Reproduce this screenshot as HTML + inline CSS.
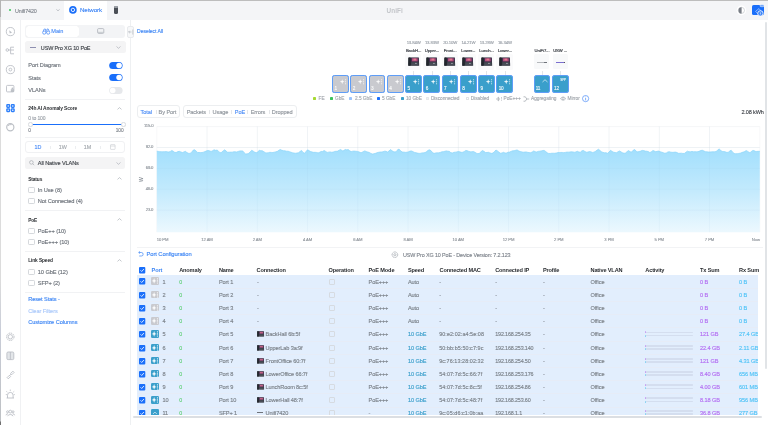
<!DOCTYPE html><html><head><meta charset="utf-8"><style>
*{box-sizing:border-box;margin:0;padding:0}
html,body{width:768px;height:425px;overflow:hidden;background:#fff}
body{position:relative;font-family:"Liberation Sans",sans-serif}
#w{position:absolute;left:0;top:0;width:768px;height:425px;overflow:hidden;will-change:transform;background:#fff}
.t{position:absolute;line-height:10px;white-space:nowrap;-webkit-text-stroke-width:0.13px}
.r{position:absolute}
svg{position:absolute;overflow:visible}
</style></head><body><div id="w">
<div class="r" style="left:0px;top:0px;width:768px;height:20px;background:#f4f5f7;"></div>
<div class="r" style="left:0px;top:0px;width:768px;height:1px;background:#bdbdbd;"></div>
<div class="r" style="left:64px;top:1px;width:43px;height:19px;background:#ffffff;"></div>
<div class="r" style="left:9px;top:9.3px;width:2.2px;height:2.2px;background:#38c55a;border-radius:50%"></div>
<div class="t" style="left:15px;top:5.5px;font-size:5.4px;color:#80868e;font-weight:400;letter-spacing:-0.12px;">Unifi7420</div>
<svg style="left:55.8px;top:9px" width="4" height="3"><path d="M0.4 0.4 L2 1.8 L3.6 0.4" fill="none" stroke="#9aa0a8" stroke-width="0.6"/></svg>
<svg style="left:69px;top:6.3px" width="8" height="8"><circle cx="3.9" cy="3.9" r="3.8" fill="#1a6ffa"/><circle cx="3.9" cy="3.9" r="1.7" fill="none" stroke="#fff" stroke-width="0.9"/></svg>
<div class="t" style="left:80px;top:5.199999999999999px;font-size:6.2px;color:#3e86f6;font-weight:400;letter-spacing:-0.1px;">Network</div>
<div class="r" style="left:113.5px;top:6px;width:4.5px;height:8px;background:#4a4f56;border-radius:1.5px"></div>
<div class="r" style="left:114px;top:6.3px;width:3.5px;height:1.5px;background:#9a9ea5;border-radius:1px"></div>
<div class="t" style="left:386.5px;top:5.5px;font-size:6.4px;color:#c3c6ca;font-weight:700;letter-spacing:0.1px;-webkit-text-stroke-width:0;">UniFi</div>
<svg style="left:736px;top:4.5px" width="11" height="11"><circle cx="5.4" cy="5.4" r="4.8" fill="#fff"/><circle cx="5.4" cy="5.4" r="3.1" fill="none" stroke="#b9bdc2" stroke-width="0.6"/><path d="M5.6 2.3 A3.1 3.1 0 0 0 5.6 8.5 Z" fill="#777c84"/></svg>
<div class="r" style="left:752.3px;top:5px;width:11.9px;height:9.9px;background:#1a6ffa;border-radius:1.6px"></div>
<svg style="left:750px;top:3px" width="18" height="15"><path d="M5.6 8.3 L9 5.6 L10.8 7.7 L7.4 10.4 Z" fill="none" stroke="#a9c9fd" stroke-width="0.75" stroke-linejoin="round"/><rect x="10" y="1.7" width="4" height="2" rx="1" fill="#69a3fb" stroke="#f4f5f7" stroke-width="0.5"/><circle cx="10.4" cy="10.4" r="2.7" fill="#3f86f8" stroke="#fff" stroke-width="0.8"/><path d="M10.4 9.3 V11.5" stroke="#fff" stroke-width="0.6"/></svg>
<div class="r" style="left:0px;top:0px;width:1.2px;height:425px;background:linear-gradient(#b4b4b4 0, #b4b4b4 17px, #dcdcdc 17px, #dcdcdc 280px, #c9cdd8 330px, #bfc2c6 410px, #bfc2c6 421px, #707070 422px);"></div>
<div class="r" style="left:20px;top:20px;width:0.8px;height:405px;background:#f0f1f3;"></div>
<svg style="left:0;top:0" width="20" height="425">
<g fill="none" stroke="#bcc0c6" stroke-width="0.9">
<circle cx="10.4" cy="31.6" r="4.1"/>
<circle cx="7.3" cy="50" r="1.3"/><path d="M8.6 50 H14 M10.6 47.2 V53.8 M10.6 47.2 H14 M10.6 53.8 H14"/>
<circle cx="10.4" cy="69.6" r="4.1"/><circle cx="10.4" cy="69.6" r="1.4"/>
<rect x="6.5" y="85.4" width="7.4" height="6.5" rx="0.9"/>
<circle cx="10.3" cy="127.2" r="3.6" stroke-width="1.15"/><path d="M8 125.8 Q9.5 124.2 11.6 124.6"/>
<circle cx="10.3" cy="336.8" r="2.2"/><circle cx="10.3" cy="336.8" r="3.7" stroke-dasharray="1.3 0.65" stroke-width="1"/>
<rect x="6.9" y="352" width="6.9" height="7.6" rx="1.2" fill="#e3e6e9"/><path d="M10.35 352 V359.6"/>
<path d="M7.1 377.6 L9.4 375.3 L10.6 376.5 L8.3 378.8 Z M10.6 373.5 L12.9 371.2 L14.1 372.4 L11.8 374.7 Z" stroke-linejoin="round"/><path d="M9.4 375.8 L11.2 374"/>
<path d="M6.6 398 H14 M7.5 398 V395.2 A2.8 2.8 0 0 1 13.1 395.2 V398 M10.3 389.6 V390.9 M6.4 391.4 L7.3 392.1 M14.2 391.4 L13.3 392.1 M5.8 394.6 H6.9 M13.7 394.6 H14.8"/>
<circle cx="10.3" cy="411.6" r="1.4"/><path d="M7.6 416.2 A2.8 2.3 0 0 1 13 416.2"/><circle cx="7.6" cy="411.8" r="1"/><circle cx="13" cy="411.8" r="1"/><path d="M6 415.3 A1.8 1.6 0 0 1 8 413.8 M14.6 415.3 A1.8 1.6 0 0 0 12.6 413.8"/>
</g>
<path d="M9.2 30.2 L12 32.4 L9.8 33.4 Z" fill="#bcc0c6"/>
<path d="M10.8 89.2 H14 V92 H10.8 Z" fill="#bcc0c6"/><circle cx="12.4" cy="88.4" r="0.9" fill="#bcc0c6"/>
<g fill="#2d7ff9">
<rect x="6.2" y="104" width="4" height="3.9" rx="1.1"/><rect x="10.8" y="104" width="4" height="3.9" rx="1.1"/>
<rect x="6.2" y="108.3" width="4" height="3.9" rx="1.1"/><rect x="10.8" y="108.3" width="4" height="3.9" rx="1.1"/>
</g>
<g fill="#fff"><circle cx="8.2" cy="106" r="0.7"/><circle cx="12.8" cy="106" r="0.7"/><circle cx="8.2" cy="110.2" r="0.7"/><circle cx="12.8" cy="110.2" r="0.7"/></g>
</svg>
<div class="r" style="left:130px;top:20px;width:0.8px;height:405px;background:#eef0f2;"></div>
<div class="r" style="left:25px;top:25.1px;width:99.5px;height:12.5px;background:#f3f4f6;border-radius:3px"></div>
<div class="r" style="left:25.6px;top:25.6px;width:53.4px;height:11.5px;background:#ffffff;border-radius:2.5px;box-shadow:0 0 0.5px rgba(0,0,0,0.12)"></div>
<svg style="left:41.5px;top:28px" width="9" height="7"><g fill="none" stroke="#4d8ef7" stroke-width="0.75"><circle cx="2.2" cy="4.6" r="1.6"/><circle cx="6.2" cy="4.6" r="1.6"/><path d="M1 3.5 L2.2 1 H3.4 L3.8 3.5 M7.4 3.5 L6.2 1 H5 L4.6 3.5 M3.8 4.2 H4.6"/></g></svg>
<div class="t" style="left:51.2px;top:26.4px;font-size:5.6px;color:#4d8ef7;font-weight:400;letter-spacing:0.05px;">Main</div>
<svg style="left:97px;top:27.8px" width="8" height="7"><rect x="0.6" y="0.6" width="6.2" height="4.8" rx="1" fill="none" stroke="#a9aeb5" stroke-width="0.75"/><path d="M1 4.3 H6.4" stroke="#a9aeb5" stroke-width="0.6"/></svg>
<div class="r" style="left:25px;top:41.1px;width:100.7px;height:12.2px;background:#f4f4f5;border-radius:2.5px"></div>
<div class="r" style="left:30px;top:47.2px;width:6px;height:0.7px;background:#8e8fb0;"></div>
<div class="t" style="left:40.8px;top:42.8px;font-size:5.5px;color:#3b3f45;font-weight:400;letter-spacing:-0.14px;">USW Pro XG 10 PoE</div>
<svg style="left:115.5px;top:46.3px" width="5" height="3"><path d="M0.5 0.5 L2.5 2.3 L4.5 0.5" fill="none" stroke="#a0a5ac" stroke-width="0.6"/></svg>
<div class="t" style="left:28.3px;top:60.0px;font-size:5.6px;color:#6b7179;font-weight:400;letter-spacing:-0.05px;">Port Diagram</div>
<svg style="left:109px;top:61.5px" width="14" height="7"><rect x="0.2" y="0" width="13.4" height="7" rx="3.5" fill="#1a6ffa"/><circle cx="10.1" cy="3.5" r="2.8" fill="#fff"/></svg>
<div class="t" style="left:28.3px;top:72.6px;font-size:5.6px;color:#6b7179;font-weight:400;letter-spacing:-0.05px;">Stats</div>
<svg style="left:109px;top:74.1px" width="14" height="7"><rect x="0.2" y="0" width="13.4" height="7" rx="3.5" fill="#1a6ffa"/><circle cx="10.1" cy="3.5" r="2.8" fill="#fff"/></svg>
<div class="t" style="left:28.3px;top:85.0px;font-size:5.6px;color:#6b7179;font-weight:400;letter-spacing:-0.05px;">VLANs</div>
<svg style="left:109px;top:86.5px" width="14" height="7"><rect x="0.2" y="0" width="13.4" height="7" rx="3.5" fill="#e6e8eb"/><circle cx="3.7" cy="3.5" r="2.8" fill="#fff"/></svg>
<div class="r" style="left:25px;top:98.5px;width:100px;height:0.6px;background:#f1f2f4;"></div>
<div class="t" style="left:28.2px;top:104.0px;font-size:4.9px;color:#2a2d31;font-weight:700;letter-spacing:-0.12px;-webkit-text-stroke-width:0;">24h AI Anomaly Score</div>
<svg style="left:116.5px;top:106.5px" width="5" height="3"><path d="M0.5 2.4 L2.5 0.6 L4.5 2.4" fill="none" stroke="#a0a5ac" stroke-width="0.6"/></svg>
<div class="t" style="left:28.2px;top:112.8px;font-size:5px;color:#9ba1a8;font-weight:400;letter-spacing:-0.1px;">0 to 100</div>
<div class="r" style="left:30px;top:123.9px;width:93px;height:1.1px;background:#1a6ffa;"></div>
<div class="r" style="left:27.8px;top:121.9px;width:5px;height:5px;background:#fff;border-radius:50%;border:0.5px solid #dfe2e6;box-shadow:0 0 0.6px rgba(0,0,0,0.15)"></div>
<div class="r" style="left:120.6px;top:121.9px;width:5px;height:5px;background:#fff;border-radius:50%;border:0.5px solid #dfe2e6;box-shadow:0 0 0.6px rgba(0,0,0,0.15)"></div>
<div class="t" style="left:28.3px;top:126.30000000000001px;font-size:4.8px;color:#80868e;font-weight:400;">0</div>
<div class="t" style="right:644.5px;top:126.30000000000001px;font-size:4.8px;color:#80868e;font-weight:400;letter-spacing:-0.1px;">100</div>
<div class="r" style="left:25px;top:137px;width:100px;height:0.6px;background:#f1f2f4;"></div>
<div class="r" style="left:25px;top:140.8px;width:100px;height:12.4px;background:#fff;border-radius:3px;border:0.6px solid #f0f1f3"></div>
<div class="t" style="left:-12px;width:100px;text-align:center;top:142.0px;font-size:5.4px;color:#4d8ef7;font-weight:400;">1D</div>
<div class="t" style="left:12.799999999999997px;width:100px;text-align:center;top:142.0px;font-size:5.4px;color:#a3a8ae;font-weight:400;">1W</div>
<div class="t" style="left:37.5px;width:100px;text-align:center;top:142.0px;font-size:5.4px;color:#a3a8ae;font-weight:400;">1M</div>
<div class="r" style="left:50.3px;top:145.5px;width:0.5px;height:3px;background:#eceef0;"></div>
<div class="r" style="left:75.3px;top:145.5px;width:0.5px;height:3px;background:#eceef0;"></div>
<div class="r" style="left:100.3px;top:145.5px;width:0.5px;height:3px;background:#eceef0;"></div>
<svg style="left:110px;top:144px" width="6" height="6"><rect x="0.5" y="0.6" width="4.6" height="4.8" rx="0.5" fill="none" stroke="#c3c7cc" stroke-width="0.55"/><path d="M0.5 2 H5.1" stroke="#c3c7cc" stroke-width="0.55"/></svg>
<div class="r" style="left:25px;top:156.8px;width:100px;height:12.3px;background:#f4f4f5;border-radius:2.5px"></div>
<svg style="left:28.5px;top:160.3px" width="6" height="6"><circle cx="2.4" cy="2.4" r="1.8" fill="none" stroke="#9ca1a8" stroke-width="0.6"/><path d="M3.7 3.7 L5.2 5.2" stroke="#9ca1a8" stroke-width="0.6"/></svg>
<div class="t" style="left:37.8px;top:158.2px;font-size:5.6px;color:#3b3f45;font-weight:400;letter-spacing:-0.1px;">All Native VLANs</div>
<svg style="left:115.5px;top:161.8px" width="5" height="3"><path d="M0.5 0.5 L2.5 2.3 L4.5 0.5" fill="none" stroke="#a0a5ac" stroke-width="0.6"/></svg>
<div class="t" style="left:28.2px;top:174.8px;font-size:4.8px;color:#2a2d31;font-weight:700;letter-spacing:-0.1px;-webkit-text-stroke-width:0;">Status</div>
<svg style="left:116.5px;top:177.0px" width="5" height="3"><path d="M0.5 2.4 L2.5 0.6 L4.5 2.4" fill="none" stroke="#a0a5ac" stroke-width="0.6"/></svg>
<div class="r" style="left:28.3px;top:186.9px;width:6.4px;height:6.4px;background:#fff;border:0.6px solid #d5d8dc;border-radius:1.2px"></div>
<div class="t" style="left:37.8px;top:185.0px;font-size:5.7px;color:#6b7179;font-weight:400;letter-spacing:-0.1px;">In Use (8)</div>
<div class="r" style="left:28.3px;top:197.9px;width:6.4px;height:6.4px;background:#fff;border:0.6px solid #d5d8dc;border-radius:1.2px"></div>
<div class="t" style="left:37.8px;top:196.0px;font-size:5.7px;color:#6b7179;font-weight:400;letter-spacing:-0.1px;">Not Connected (4)</div>
<div class="r" style="left:25px;top:209.5px;width:100px;height:0.6px;background:#f1f2f4;"></div>
<div class="t" style="left:28.2px;top:215.5px;font-size:4.8px;color:#2a2d31;font-weight:700;letter-spacing:-0.1px;-webkit-text-stroke-width:0;">PoE</div>
<svg style="left:116.5px;top:217.7px" width="5" height="3"><path d="M0.5 2.4 L2.5 0.6 L4.5 2.4" fill="none" stroke="#a0a5ac" stroke-width="0.6"/></svg>
<div class="r" style="left:28.3px;top:227.9px;width:6.4px;height:6.4px;background:#fff;border:0.6px solid #d5d8dc;border-radius:1.2px"></div>
<div class="t" style="left:37.8px;top:226.0px;font-size:5.7px;color:#6b7179;font-weight:400;letter-spacing:-0.1px;">PoE++ (10)</div>
<div class="r" style="left:28.3px;top:238.70000000000002px;width:6.4px;height:6.4px;background:#fff;border:0.6px solid #d5d8dc;border-radius:1.2px"></div>
<div class="t" style="left:37.8px;top:236.8px;font-size:5.7px;color:#6b7179;font-weight:400;letter-spacing:-0.1px;">PoE+++ (10)</div>
<div class="r" style="left:25px;top:251px;width:100px;height:0.6px;background:#f1f2f4;"></div>
<div class="t" style="left:28.2px;top:256.4px;font-size:4.8px;color:#2a2d31;font-weight:700;letter-spacing:-0.1px;-webkit-text-stroke-width:0;">Link Speed</div>
<svg style="left:116.5px;top:258.6px" width="5" height="3"><path d="M0.5 2.4 L2.5 0.6 L4.5 2.4" fill="none" stroke="#a0a5ac" stroke-width="0.6"/></svg>
<div class="r" style="left:28.3px;top:268.79999999999995px;width:6.4px;height:6.4px;background:#fff;border:0.6px solid #d5d8dc;border-radius:1.2px"></div>
<div class="t" style="left:37.8px;top:266.9px;font-size:5.7px;color:#6b7179;font-weight:400;letter-spacing:-0.1px;">10 GbE (12)</div>
<div class="r" style="left:28.3px;top:279.9px;width:6.4px;height:6.4px;background:#fff;border:0.6px solid #d5d8dc;border-radius:1.2px"></div>
<div class="t" style="left:37.8px;top:278.0px;font-size:5.7px;color:#6b7179;font-weight:400;letter-spacing:-0.1px;">SFP+ (2)</div>
<div class="r" style="left:25px;top:291.6px;width:100px;height:0.6px;background:#f1f2f4;"></div>
<div class="t" style="left:28.2px;top:294.4px;font-size:5.6px;color:#3d86f5;font-weight:400;letter-spacing:-0.05px;">Reset Stats -</div>
<div class="t" style="left:28.2px;top:305.7px;font-size:5.6px;color:#a9c8fa;font-weight:400;letter-spacing:-0.05px;">Clear Filters</div>
<div class="t" style="left:28.2px;top:316.8px;font-size:5.6px;color:#3d86f5;font-weight:400;letter-spacing:-0.05px;">Customize Columns</div>
<div class="r" style="left:127px;top:25.5px;width:7.4px;height:12.5px;background:#f7f8f9;border:0.6px solid #e8eaed;border-radius:2px"></div>
<svg style="left:128px;top:28.5px" width="6" height="6"><path d="M4.8 0.5 V5.5 M3.5 3 H0.6 M1.8 1.8 L0.6 3 L1.8 4.2" fill="none" stroke="#a9aeb5" stroke-width="0.6"/></svg>
<div class="t" style="left:137px;top:26.4px;font-size:5.1px;color:#3d86f5;font-weight:400;letter-spacing:-0.05px;">Deselect All</div>
<div class="r" style="left:765px;top:21.9px;width:1.9px;height:347px;background:#e1e4e7;border-radius:1px"></div>
<div class="r" style="left:332.2px;top:75.0px;width:16.8px;height:17.5px;background:#c9cacf;border:1.45px solid #5e9df7;border-radius:2.6px;box-shadow:0 0 0.6px #8fbdfb"></div>
<svg style="left:339.8px;top:78.6px" width="7" height="7"><path d="M2.2 0.2 L2.8 2.1 L4.6 2.7 L2.8 3.3 L2.2 5.2 L1.6 3.3 L-0.2 2.7 L1.6 2.1 Z" fill="rgba(255,255,255,0.92)"/><circle cx="5.6" cy="0.7" r="0.55" fill="rgba(255,255,255,0.92)"/><circle cx="5.6" cy="2.7" r="0.55" fill="rgba(255,255,255,0.92)"/><circle cx="5.6" cy="4.7" r="0.55" fill="rgba(255,255,255,0.92)"/></svg>
<div class="t" style="left:334.4px;top:84.1px;font-size:4.7px;color:rgba(255,255,255,0.92);font-weight:400;letter-spacing:-0.2px;">1</div>
<div class="r" style="left:350.45px;top:75.0px;width:16.8px;height:17.5px;background:#c9cacf;border:1.45px solid #5e9df7;border-radius:2.6px;box-shadow:0 0 0.6px #8fbdfb"></div>
<svg style="left:358.05px;top:78.6px" width="7" height="7"><path d="M2.2 0.2 L2.8 2.1 L4.6 2.7 L2.8 3.3 L2.2 5.2 L1.6 3.3 L-0.2 2.7 L1.6 2.1 Z" fill="rgba(255,255,255,0.92)"/><circle cx="5.6" cy="0.7" r="0.55" fill="rgba(255,255,255,0.92)"/><circle cx="5.6" cy="2.7" r="0.55" fill="rgba(255,255,255,0.92)"/><circle cx="5.6" cy="4.7" r="0.55" fill="rgba(255,255,255,0.92)"/></svg>
<div class="t" style="left:352.65px;top:84.1px;font-size:4.7px;color:rgba(255,255,255,0.92);font-weight:400;letter-spacing:-0.2px;">2</div>
<div class="r" style="left:368.7px;top:75.0px;width:16.8px;height:17.5px;background:#c9cacf;border:1.45px solid #5e9df7;border-radius:2.6px;box-shadow:0 0 0.6px #8fbdfb"></div>
<svg style="left:376.3px;top:78.6px" width="7" height="7"><path d="M2.2 0.2 L2.8 2.1 L4.6 2.7 L2.8 3.3 L2.2 5.2 L1.6 3.3 L-0.2 2.7 L1.6 2.1 Z" fill="rgba(255,255,255,0.92)"/><circle cx="5.6" cy="0.7" r="0.55" fill="rgba(255,255,255,0.92)"/><circle cx="5.6" cy="2.7" r="0.55" fill="rgba(255,255,255,0.92)"/><circle cx="5.6" cy="4.7" r="0.55" fill="rgba(255,255,255,0.92)"/></svg>
<div class="t" style="left:370.9px;top:84.1px;font-size:4.7px;color:rgba(255,255,255,0.92);font-weight:400;letter-spacing:-0.2px;">3</div>
<div class="r" style="left:386.95px;top:75.0px;width:16.8px;height:17.5px;background:#c9cacf;border:1.45px solid #5e9df7;border-radius:2.6px;box-shadow:0 0 0.6px #8fbdfb"></div>
<svg style="left:394.55px;top:78.6px" width="7" height="7"><path d="M2.2 0.2 L2.8 2.1 L4.6 2.7 L2.8 3.3 L2.2 5.2 L1.6 3.3 L-0.2 2.7 L1.6 2.1 Z" fill="rgba(255,255,255,0.92)"/><circle cx="5.6" cy="0.7" r="0.55" fill="rgba(255,255,255,0.92)"/><circle cx="5.6" cy="2.7" r="0.55" fill="rgba(255,255,255,0.92)"/><circle cx="5.6" cy="4.7" r="0.55" fill="rgba(255,255,255,0.92)"/></svg>
<div class="t" style="left:389.15px;top:84.1px;font-size:4.7px;color:rgba(255,255,255,0.92);font-weight:400;letter-spacing:-0.2px;">4</div>
<div class="r" style="left:405.2px;top:75.0px;width:16.8px;height:17.5px;background:#3a9fcb;border:1.45px solid #5e9df7;border-radius:2.6px;box-shadow:0 0 0.6px #8fbdfb"></div>
<svg style="left:412.8px;top:78.6px" width="7" height="7"><path d="M2.2 0.2 L2.8 2.1 L4.6 2.7 L2.8 3.3 L2.2 5.2 L1.6 3.3 L-0.2 2.7 L1.6 2.1 Z" fill="rgba(255,255,255,0.92)"/><circle cx="5.6" cy="0.7" r="0.55" fill="rgba(255,255,255,0.92)"/><circle cx="5.6" cy="2.7" r="0.55" fill="rgba(255,255,255,0.92)"/><circle cx="5.6" cy="4.7" r="0.55" fill="rgba(255,255,255,0.92)"/></svg>
<div class="t" style="left:407.4px;top:84.1px;font-size:4.7px;color:rgba(255,255,255,0.92);font-weight:400;letter-spacing:-0.2px;">5</div>
<div class="r" style="left:423.45px;top:75.0px;width:16.8px;height:17.5px;background:#3a9fcb;border:1.45px solid #5e9df7;border-radius:2.6px;box-shadow:0 0 0.6px #8fbdfb"></div>
<svg style="left:431.05px;top:78.6px" width="7" height="7"><path d="M2.2 0.2 L2.8 2.1 L4.6 2.7 L2.8 3.3 L2.2 5.2 L1.6 3.3 L-0.2 2.7 L1.6 2.1 Z" fill="rgba(255,255,255,0.92)"/><circle cx="5.6" cy="0.7" r="0.55" fill="rgba(255,255,255,0.92)"/><circle cx="5.6" cy="2.7" r="0.55" fill="rgba(255,255,255,0.92)"/><circle cx="5.6" cy="4.7" r="0.55" fill="rgba(255,255,255,0.92)"/></svg>
<div class="t" style="left:425.65px;top:84.1px;font-size:4.7px;color:rgba(255,255,255,0.92);font-weight:400;letter-spacing:-0.2px;">6</div>
<div class="r" style="left:441.7px;top:75.0px;width:16.8px;height:17.5px;background:#3a9fcb;border:1.45px solid #5e9df7;border-radius:2.6px;box-shadow:0 0 0.6px #8fbdfb"></div>
<svg style="left:449.3px;top:78.6px" width="7" height="7"><path d="M2.2 0.2 L2.8 2.1 L4.6 2.7 L2.8 3.3 L2.2 5.2 L1.6 3.3 L-0.2 2.7 L1.6 2.1 Z" fill="rgba(255,255,255,0.92)"/><circle cx="5.6" cy="0.7" r="0.55" fill="rgba(255,255,255,0.92)"/><circle cx="5.6" cy="2.7" r="0.55" fill="rgba(255,255,255,0.92)"/><circle cx="5.6" cy="4.7" r="0.55" fill="rgba(255,255,255,0.92)"/></svg>
<div class="t" style="left:443.9px;top:84.1px;font-size:4.7px;color:rgba(255,255,255,0.92);font-weight:400;letter-spacing:-0.2px;">7</div>
<div class="r" style="left:459.95px;top:75.0px;width:16.8px;height:17.5px;background:#3a9fcb;border:1.45px solid #5e9df7;border-radius:2.6px;box-shadow:0 0 0.6px #8fbdfb"></div>
<svg style="left:467.55px;top:78.6px" width="7" height="7"><path d="M2.2 0.2 L2.8 2.1 L4.6 2.7 L2.8 3.3 L2.2 5.2 L1.6 3.3 L-0.2 2.7 L1.6 2.1 Z" fill="rgba(255,255,255,0.92)"/><circle cx="5.6" cy="0.7" r="0.55" fill="rgba(255,255,255,0.92)"/><circle cx="5.6" cy="2.7" r="0.55" fill="rgba(255,255,255,0.92)"/><circle cx="5.6" cy="4.7" r="0.55" fill="rgba(255,255,255,0.92)"/></svg>
<div class="t" style="left:462.15px;top:84.1px;font-size:4.7px;color:rgba(255,255,255,0.92);font-weight:400;letter-spacing:-0.2px;">8</div>
<div class="r" style="left:478.2px;top:75.0px;width:16.8px;height:17.5px;background:#3a9fcb;border:1.45px solid #5e9df7;border-radius:2.6px;box-shadow:0 0 0.6px #8fbdfb"></div>
<svg style="left:485.8px;top:78.6px" width="7" height="7"><path d="M2.2 0.2 L2.8 2.1 L4.6 2.7 L2.8 3.3 L2.2 5.2 L1.6 3.3 L-0.2 2.7 L1.6 2.1 Z" fill="rgba(255,255,255,0.92)"/><circle cx="5.6" cy="0.7" r="0.55" fill="rgba(255,255,255,0.92)"/><circle cx="5.6" cy="2.7" r="0.55" fill="rgba(255,255,255,0.92)"/><circle cx="5.6" cy="4.7" r="0.55" fill="rgba(255,255,255,0.92)"/></svg>
<div class="t" style="left:480.4px;top:84.1px;font-size:4.7px;color:rgba(255,255,255,0.92);font-weight:400;letter-spacing:-0.2px;">9</div>
<div class="r" style="left:496.45px;top:75.0px;width:16.8px;height:17.5px;background:#3a9fcb;border:1.45px solid #5e9df7;border-radius:2.6px;box-shadow:0 0 0.6px #8fbdfb"></div>
<svg style="left:504.05px;top:78.6px" width="7" height="7"><path d="M2.2 0.2 L2.8 2.1 L4.6 2.7 L2.8 3.3 L2.2 5.2 L1.6 3.3 L-0.2 2.7 L1.6 2.1 Z" fill="rgba(255,255,255,0.92)"/><circle cx="5.6" cy="0.7" r="0.55" fill="rgba(255,255,255,0.92)"/><circle cx="5.6" cy="2.7" r="0.55" fill="rgba(255,255,255,0.92)"/><circle cx="5.6" cy="4.7" r="0.55" fill="rgba(255,255,255,0.92)"/></svg>
<div class="t" style="left:498.65px;top:84.1px;font-size:4.7px;color:rgba(255,255,255,0.92);font-weight:400;letter-spacing:-0.2px;">10</div>
<div class="r" style="left:533.5px;top:75.0px;width:16.8px;height:17.5px;background:#3a9fcb;border:1.45px solid #5e9df7;border-radius:2.6px;box-shadow:0 0 0.6px #8fbdfb"></div>
<svg style="left:541.5px;top:79.0px" width="6" height="4"><path d="M0.5 3 L3 0.7 L5.5 3" fill="none" stroke="rgba(255,255,255,0.92)" stroke-width="0.7"/></svg>
<div class="t" style="left:535.7px;top:84.1px;font-size:4.7px;color:rgba(255,255,255,0.92);font-weight:400;letter-spacing:-0.2px;">11</div>
<div class="r" style="left:551.8px;top:75.0px;width:16.8px;height:17.5px;background:#3a9fcb;border:1.45px solid #5e9df7;border-radius:2.6px;box-shadow:0 0 0.6px #8fbdfb"></div>
<div class="t" style="left:513.0999999999999px;width:100px;text-align:center;top:75.0px;font-size:3px;color:rgba(255,255,255,0.92);font-weight:700;letter-spacing:-0.1px;-webkit-text-stroke-width:0;">SFP</div>
<div class="t" style="left:554.0px;top:84.1px;font-size:4.7px;color:rgba(255,255,255,0.92);font-weight:400;letter-spacing:-0.2px;">12</div>
<div class="t" style="left:363.59999999999997px;width:100px;text-align:center;top:37.5px;font-size:4.3px;color:#9aa0a8;font-weight:400;letter-spacing:-0.15px;">13.84W</div>
<div class="t" style="left:363.59999999999997px;width:100px;text-align:center;top:45.9px;font-size:4.2px;color:#45494f;font-weight:400;letter-spacing:-0.05px;-webkit-text-stroke-width:0.2px;">BackH...</div>
<div class="r" style="left:405.09999999999997px;top:54.1px;width:16.2px;height:15.5px;background:#fafafb;border-radius:1.5px"></div>
<svg style="left:407.59999999999997px;top:57.4px" width="12" height="10"><path d="M0.6 0.4 H10.8 L11.2 8.8 H0.2 Z" fill="#2f333c"/><rect x="0.3" y="0.4" width="2.4" height="8.4" rx="0.6" fill="#22252c"/><rect x="3" y="0.9" width="7.6" height="3.9" fill="#4a2d52"/><rect x="4" y="1.3" width="5.6" height="3" fill="#b4507c"/><rect x="5.5" y="1.6" width="2.6" height="1.8" fill="#e27a8e"/><rect x="3.2" y="5.3" width="7.4" height="3" fill="#474b55"/><rect x="7.4" y="5.9" width="1.1" height="1.1" fill="#b9bcc4"/></svg>
<div class="r" style="left:413.4px;top:71px;width:0.5px;height:3.5px;background:#e3e5e8;"></div>
<div class="t" style="left:381.84999999999997px;width:100px;text-align:center;top:37.5px;font-size:4.3px;color:#9aa0a8;font-weight:400;letter-spacing:-0.15px;">13.83W</div>
<div class="t" style="left:381.84999999999997px;width:100px;text-align:center;top:45.9px;font-size:4.2px;color:#45494f;font-weight:400;letter-spacing:-0.05px;-webkit-text-stroke-width:0.2px;">Upper...</div>
<div class="r" style="left:423.34999999999997px;top:54.1px;width:16.2px;height:15.5px;background:#fafafb;border-radius:1.5px"></div>
<svg style="left:425.84999999999997px;top:57.4px" width="12" height="10"><path d="M0.6 0.4 H10.8 L11.2 8.8 H0.2 Z" fill="#2f333c"/><rect x="0.3" y="0.4" width="2.4" height="8.4" rx="0.6" fill="#22252c"/><rect x="3" y="0.9" width="7.6" height="3.9" fill="#4a2d52"/><rect x="4" y="1.3" width="5.6" height="3" fill="#b4507c"/><rect x="5.5" y="1.6" width="2.6" height="1.8" fill="#e27a8e"/><rect x="3.2" y="5.3" width="7.4" height="3" fill="#474b55"/><rect x="7.4" y="5.9" width="1.1" height="1.1" fill="#b9bcc4"/></svg>
<div class="r" style="left:431.65px;top:71px;width:0.5px;height:3.5px;background:#e3e5e8;"></div>
<div class="t" style="left:400.09999999999997px;width:100px;text-align:center;top:37.5px;font-size:4.3px;color:#9aa0a8;font-weight:400;letter-spacing:-0.15px;">20.10W</div>
<div class="t" style="left:400.09999999999997px;width:100px;text-align:center;top:45.9px;font-size:4.2px;color:#45494f;font-weight:400;letter-spacing:-0.05px;-webkit-text-stroke-width:0.2px;">Front...</div>
<div class="r" style="left:441.59999999999997px;top:54.1px;width:16.2px;height:15.5px;background:#fafafb;border-radius:1.5px"></div>
<svg style="left:444.09999999999997px;top:57.4px" width="12" height="10"><path d="M0.6 0.4 H10.8 L11.2 8.8 H0.2 Z" fill="#2f333c"/><rect x="0.3" y="0.4" width="2.4" height="8.4" rx="0.6" fill="#22252c"/><rect x="3" y="0.9" width="7.6" height="3.9" fill="#4a2d52"/><rect x="4" y="1.3" width="5.6" height="3" fill="#b4507c"/><rect x="5.5" y="1.6" width="2.6" height="1.8" fill="#e27a8e"/><rect x="3.2" y="5.3" width="7.4" height="3" fill="#474b55"/><rect x="7.4" y="5.9" width="1.1" height="1.1" fill="#b9bcc4"/></svg>
<div class="r" style="left:449.9px;top:71px;width:0.5px;height:3.5px;background:#e3e5e8;"></div>
<div class="t" style="left:418.34999999999997px;width:100px;text-align:center;top:37.5px;font-size:4.3px;color:#9aa0a8;font-weight:400;letter-spacing:-0.15px;">14.21W</div>
<div class="t" style="left:418.34999999999997px;width:100px;text-align:center;top:45.9px;font-size:4.2px;color:#45494f;font-weight:400;letter-spacing:-0.05px;-webkit-text-stroke-width:0.2px;">Lower...</div>
<div class="r" style="left:459.84999999999997px;top:54.1px;width:16.2px;height:15.5px;background:#fafafb;border-radius:1.5px"></div>
<svg style="left:462.34999999999997px;top:57.4px" width="12" height="10"><path d="M0.6 0.4 H10.8 L11.2 8.8 H0.2 Z" fill="#2f333c"/><rect x="0.3" y="0.4" width="2.4" height="8.4" rx="0.6" fill="#22252c"/><rect x="3" y="0.9" width="7.6" height="3.9" fill="#4a2d52"/><rect x="4" y="1.3" width="5.6" height="3" fill="#b4507c"/><rect x="5.5" y="1.6" width="2.6" height="1.8" fill="#e27a8e"/><rect x="3.2" y="5.3" width="7.4" height="3" fill="#474b55"/><rect x="7.4" y="5.9" width="1.1" height="1.1" fill="#b9bcc4"/></svg>
<div class="r" style="left:468.15px;top:71px;width:0.5px;height:3.5px;background:#e3e5e8;"></div>
<div class="t" style="left:436.59999999999997px;width:100px;text-align:center;top:37.5px;font-size:4.3px;color:#9aa0a8;font-weight:400;letter-spacing:-0.15px;">13.28W</div>
<div class="t" style="left:436.59999999999997px;width:100px;text-align:center;top:45.9px;font-size:4.2px;color:#45494f;font-weight:400;letter-spacing:-0.05px;-webkit-text-stroke-width:0.2px;">Lunch...</div>
<div class="r" style="left:478.09999999999997px;top:54.1px;width:16.2px;height:15.5px;background:#fafafb;border-radius:1.5px"></div>
<svg style="left:480.59999999999997px;top:57.4px" width="12" height="10"><path d="M0.6 0.4 H10.8 L11.2 8.8 H0.2 Z" fill="#2f333c"/><rect x="0.3" y="0.4" width="2.4" height="8.4" rx="0.6" fill="#22252c"/><rect x="3" y="0.9" width="7.6" height="3.9" fill="#4a2d52"/><rect x="4" y="1.3" width="5.6" height="3" fill="#b4507c"/><rect x="5.5" y="1.6" width="2.6" height="1.8" fill="#e27a8e"/><rect x="3.2" y="5.3" width="7.4" height="3" fill="#474b55"/><rect x="7.4" y="5.9" width="1.1" height="1.1" fill="#b9bcc4"/></svg>
<div class="r" style="left:486.4px;top:71px;width:0.5px;height:3.5px;background:#e3e5e8;"></div>
<div class="t" style="left:454.84999999999997px;width:100px;text-align:center;top:37.5px;font-size:4.3px;color:#9aa0a8;font-weight:400;letter-spacing:-0.15px;">16.34W</div>
<div class="t" style="left:454.84999999999997px;width:100px;text-align:center;top:45.9px;font-size:4.2px;color:#45494f;font-weight:400;letter-spacing:-0.05px;-webkit-text-stroke-width:0.2px;">Lower...</div>
<div class="r" style="left:496.34999999999997px;top:54.1px;width:16.2px;height:15.5px;background:#fafafb;border-radius:1.5px"></div>
<svg style="left:498.84999999999997px;top:57.4px" width="12" height="10"><path d="M0.6 0.4 H10.8 L11.2 8.8 H0.2 Z" fill="#2f333c"/><rect x="0.3" y="0.4" width="2.4" height="8.4" rx="0.6" fill="#22252c"/><rect x="3" y="0.9" width="7.6" height="3.9" fill="#4a2d52"/><rect x="4" y="1.3" width="5.6" height="3" fill="#b4507c"/><rect x="5.5" y="1.6" width="2.6" height="1.8" fill="#e27a8e"/><rect x="3.2" y="5.3" width="7.4" height="3" fill="#474b55"/><rect x="7.4" y="5.9" width="1.1" height="1.1" fill="#b9bcc4"/></svg>
<div class="r" style="left:504.65px;top:71px;width:0.5px;height:3.5px;background:#e3e5e8;"></div>
<div class="t" style="left:492.0px;width:100px;text-align:center;top:45.9px;font-size:4.2px;color:#45494f;font-weight:400;letter-spacing:-0.05px;-webkit-text-stroke-width:0.2px;">UniFi7...</div>
<div class="r" style="left:534.4px;top:54.2px;width:15px;height:15.2px;background:#f8f9fa;border-radius:1.5px"></div>
<div class="r" style="left:541.8px;top:71px;width:0.5px;height:3.5px;background:#e3e5e8;"></div>
<div class="t" style="left:510.20000000000005px;width:100px;text-align:center;top:45.9px;font-size:4.2px;color:#45494f;font-weight:400;letter-spacing:-0.05px;-webkit-text-stroke-width:0.2px;">USW ...</div>
<div class="r" style="left:552.6px;top:54.2px;width:15px;height:15.2px;background:#f8f9fa;border-radius:1.5px"></div>
<div class="r" style="left:560.0px;top:71px;width:0.5px;height:3.5px;background:#e3e5e8;"></div>
<div class="r" style="left:536.7px;top:61.6px;width:10.1px;height:1px;background:#b5b8bc;"></div>
<div class="r" style="left:543.5px;top:61.6px;width:3.3px;height:1px;background:#6f737a;"></div>
<div class="r" style="left:556px;top:61.8px;width:8px;height:1px;background:#7b6fd0;"></div>
<div class="r" style="left:563.5px;top:61.6px;width:1.5px;height:1.4px;background:#555;"></div>
<div class="r" style="left:313px;top:97px;width:3px;height:3px;background:#a6d932;border-radius:0.4px"></div>
<div class="t" style="left:318.5px;top:93.8px;font-size:4.75px;color:#a3a8ae;font-weight:400;letter-spacing:-0.02px;">FE</div>
<div class="r" style="left:330px;top:97px;width:3px;height:3px;background:#3cc25c;border-radius:0.4px"></div>
<div class="t" style="left:335px;top:93.8px;font-size:4.75px;color:#a3a8ae;font-weight:400;letter-spacing:-0.02px;">GbE</div>
<div class="r" style="left:349px;top:97px;width:3px;height:3px;background:#9cc4fb;border-radius:0.4px"></div>
<div class="t" style="left:355px;top:93.8px;font-size:4.75px;color:#a3a8ae;font-weight:400;letter-spacing:-0.02px;">2.5 GbE</div>
<div class="r" style="left:377px;top:97px;width:3px;height:3px;background:#1a6ffa;border-radius:0.4px"></div>
<div class="t" style="left:382px;top:93.8px;font-size:4.75px;color:#a3a8ae;font-weight:400;letter-spacing:-0.02px;">5 GbE</div>
<div class="r" style="left:401px;top:97px;width:3px;height:3px;background:#3a9fcb;border-radius:0.4px"></div>
<div class="t" style="left:405.9px;top:93.8px;font-size:4.75px;color:#a3a8ae;font-weight:400;letter-spacing:-0.02px;">10 GbE</div>
<div class="r" style="left:426px;top:97px;width:3px;height:3px;background:#f0f1f3;border:0.6px solid #e6e8eb;border-radius:0.4px"></div>
<div class="t" style="left:430.9px;top:93.8px;font-size:4.75px;color:#a3a8ae;font-weight:400;letter-spacing:-0.02px;">Disconnected</div>
<div class="r" style="left:466px;top:97px;width:3px;height:3px;background:#fff;border:0.6px solid #e0e3e6;border-radius:0.4px"></div>
<div class="t" style="left:470.8px;top:93.8px;font-size:4.75px;color:#a3a8ae;font-weight:400;letter-spacing:-0.02px;">Disabled</div>
<svg style="left:495.5px;top:95.8px" width="7" height="6"><path d="M0.5 3 L2.6 1.2 V4.8 Z M2.6 3 H4" fill="none" stroke="#8f959c" stroke-width="0.6"/><path d="M5.5 1 V5" stroke="#8f959c" stroke-width="0.6" stroke-dasharray="0.8 0.6"/></svg>
<div class="t" style="left:503.5px;top:93.8px;font-size:4.75px;color:#a3a8ae;font-weight:400;letter-spacing:-0.02px;">PoE+++</div>
<svg style="left:523.3px;top:95.8px" width="7" height="6"><path d="M0.5 0.8 H2.3 L3.8 3 L2.3 5.2 H0.5 M3.8 3 H6.2" fill="none" stroke="#8f959c" stroke-width="0.6"/></svg>
<div class="t" style="left:531px;top:93.8px;font-size:4.75px;color:#a3a8ae;font-weight:400;letter-spacing:-0.02px;">Aggregating</div>
<svg style="left:559.8px;top:96.0px" width="7" height="6"><path d="M0.4 2.6 Q3.1 -0.7 5.8 2.6 Q3.1 5.9 0.4 2.6 Z" fill="none" stroke="#a3a8ae" stroke-width="0.65"/><circle cx="3.1" cy="2.6" r="1.1" fill="none" stroke="#a3a8ae" stroke-width="0.65"/></svg>
<div class="t" style="left:567.5px;top:93.8px;font-size:4.75px;color:#a3a8ae;font-weight:400;letter-spacing:-0.02px;">Mirror</div>
<svg style="left:582.3px;top:95.2px" width="8" height="8"><circle cx="3.6" cy="3.6" r="3.1" fill="none" stroke="#4d8ef7" stroke-width="0.7"/><path d="M3.6 3 V5.4" stroke="#4d8ef7" stroke-width="0.7"/><circle cx="3.6" cy="1.9" r="0.4" fill="#4d8ef7"/></svg>
<div class="r" style="left:137px;top:105px;width:43.4px;height:13.3px;background:#fff;border:0.6px solid #eceef0;border-radius:3px"></div>
<div class="t" style="left:140.5px;top:106.7px;font-size:5.6px;color:#4d8ef7;font-weight:400;letter-spacing:-0.1px;">Total</div>
<div class="r" style="left:155.6px;top:109.6px;width:0.5px;height:4.2px;background:#e4e6e9;"></div>
<div class="t" style="left:158.6px;top:106.7px;font-size:5.6px;color:#8f959c;font-weight:400;letter-spacing:-0.1px;">By Port</div>
<div class="r" style="left:183.4px;top:105px;width:113.5px;height:13.3px;background:#fff;border:0.6px solid #eceef0;border-radius:3px"></div>
<div class="t" style="left:186.7px;top:106.7px;font-size:5.6px;color:#8f959c;font-weight:400;letter-spacing:-0.1px;">Packets</div>
<div class="r" style="left:209.3px;top:109.6px;width:0.5px;height:4.2px;background:#e4e6e9;"></div>
<div class="t" style="left:212.5px;top:106.7px;font-size:5.6px;color:#8f959c;font-weight:400;letter-spacing:-0.1px;">Usage</div>
<div class="r" style="left:231.4px;top:109.6px;width:0.5px;height:4.2px;background:#e4e6e9;"></div>
<div class="t" style="left:234.8px;top:106.7px;font-size:5.6px;color:#4d8ef7;font-weight:400;letter-spacing:-0.1px;">PoE</div>
<div class="r" style="left:247.4px;top:109.6px;width:0.5px;height:4.2px;background:#e4e6e9;"></div>
<div class="t" style="left:250.7px;top:106.7px;font-size:5.6px;color:#8f959c;font-weight:400;letter-spacing:-0.1px;">Errors</div>
<div class="r" style="left:268.6px;top:109.6px;width:0.5px;height:4.2px;background:#e4e6e9;"></div>
<div class="t" style="left:271.8px;top:106.7px;font-size:5.6px;color:#8f959c;font-weight:400;letter-spacing:-0.1px;">Dropped</div>
<div class="t" style="right:4.2000000000000455px;top:107.0px;font-size:5.5px;color:#3b3f45;font-weight:400;letter-spacing:-0.1px;">2.08 kWh</div>
<svg style="left:0;top:0" width="768" height="425">
<defs><linearGradient id="g" x1="0" y1="0" x2="0" y2="1"><stop offset="0" stop-color="#a2dffd"/><stop offset="0.5" stop-color="#c3eafd"/><stop offset="1" stop-color="#ecf8fe"/></linearGradient></defs>
<path d="M156.8 126.60 H759.8" stroke="#eef0f2" stroke-width="0.6"/>
<path d="M156.8 147.48 H759.8" stroke="#eef0f2" stroke-width="0.6"/>
<path d="M156.8 168.36 H759.8" stroke="#eef0f2" stroke-width="0.6"/>
<path d="M156.8 189.24 H759.8" stroke="#eef0f2" stroke-width="0.6"/>
<path d="M156.8 210.12 H759.8" stroke="#eef0f2" stroke-width="0.6"/>
<path d="M156.8 231.00 H759.8" stroke="#eef0f2" stroke-width="0.6"/>
<path d="M156.80 126.6 V232.2" stroke="#f0f1f3" stroke-width="0.5"/>
<path d="M207.05 126.6 V232.2" stroke="#f0f1f3" stroke-width="0.5"/>
<path d="M257.30 126.6 V232.2" stroke="#f0f1f3" stroke-width="0.5"/>
<path d="M307.55 126.6 V232.2" stroke="#f0f1f3" stroke-width="0.5"/>
<path d="M357.80 126.6 V232.2" stroke="#f0f1f3" stroke-width="0.5"/>
<path d="M408.05 126.6 V232.2" stroke="#f0f1f3" stroke-width="0.5"/>
<path d="M458.30 126.6 V232.2" stroke="#f0f1f3" stroke-width="0.5"/>
<path d="M508.55 126.6 V232.2" stroke="#f0f1f3" stroke-width="0.5"/>
<path d="M558.80 126.6 V232.2" stroke="#f0f1f3" stroke-width="0.5"/>
<path d="M609.05 126.6 V232.2" stroke="#f0f1f3" stroke-width="0.5"/>
<path d="M659.30 126.6 V232.2" stroke="#f0f1f3" stroke-width="0.5"/>
<path d="M709.55 126.6 V232.2" stroke="#f0f1f3" stroke-width="0.5"/>
<path d="M759.80 126.6 V232.2" stroke="#f0f1f3" stroke-width="0.5"/>
<path d="M156.80 151.18 L158.31 151.42 L159.81 151.71 L161.32 151.68 L162.83 151.78 L164.34 151.70 L165.84 151.61 L167.35 151.83 L168.86 152.01 L170.37 151.43 L171.88 150.46 L173.38 151.35 L174.89 152.46 L176.40 152.37 L177.91 151.62 L179.41 151.37 L180.92 151.99 L182.43 152.53 L183.94 151.89 L185.44 151.37 L186.95 152.61 L188.46 153.29 L189.97 153.39 L191.47 152.44 L192.98 150.36 L194.49 149.66 L196.00 150.98 L197.50 152.40 L199.01 152.57 L200.52 152.61 L202.03 152.56 L203.53 152.13 L205.04 151.58 L206.55 150.85 L208.06 150.47 L209.56 150.84 L211.07 151.45 L212.58 150.70 L214.09 149.75 L215.59 150.33 L217.10 150.05 L218.61 151.39 L220.12 152.67 L221.62 152.31 L223.13 150.89 L224.64 149.81 L226.15 151.10 L227.65 152.27 L229.16 152.19 L230.67 152.11 L232.18 152.16 L233.68 151.76 L235.19 151.76 L236.70 151.99 L238.21 151.42 L239.71 150.97 L241.22 150.89 L242.73 150.88 L244.24 152.84 L245.74 154.05 L247.25 153.84 L248.76 153.30 L250.27 151.86 L251.77 150.26 L253.28 151.20 L254.79 152.25 L256.30 152.68 L257.80 151.84 L259.31 150.37 L260.82 150.70 L262.33 150.75 L263.83 151.69 L265.34 152.65 L266.85 152.88 L268.36 152.71 L269.86 152.31 L271.37 152.45 L272.88 152.53 L274.38 152.15 L275.89 151.85 L277.40 151.35 L278.91 150.19 L280.42 149.52 L281.92 150.33 L283.43 150.67 L284.94 150.80 L286.45 151.20 L287.95 151.21 L289.46 151.63 L290.97 152.22 L292.48 152.72 L293.98 153.07 L295.49 153.23 L297.00 153.04 L298.50 152.71 L300.01 151.52 L301.52 150.47 L303.03 152.39 L304.54 153.30 L306.04 151.47 L307.55 149.86 L309.06 150.64 L310.56 151.51 L312.07 151.97 L313.58 152.35 L315.09 152.32 L316.60 152.44 L318.10 152.88 L319.61 152.30 L321.12 151.47 L322.62 151.46 L324.13 150.52 L325.64 151.39 L327.15 152.40 L328.65 152.14 L330.16 151.92 L331.67 152.28 L333.18 152.08 L334.69 151.38 L336.19 151.34 L337.70 151.12 L339.21 150.13 L340.72 149.51 L342.22 150.81 L343.73 150.57 L345.24 149.46 L346.75 149.87 L348.25 149.56 L349.76 150.86 L351.27 151.55 L352.77 151.17 L354.28 151.10 L355.79 151.24 L357.30 151.41 L358.81 151.80 L360.31 152.50 L361.82 152.52 L363.33 151.54 L364.84 150.88 L366.34 151.60 L367.85 152.10 L369.36 152.46 L370.87 153.45 L372.37 154.01 L373.88 153.78 L375.39 153.36 L376.89 152.79 L378.40 152.34 L379.91 152.07 L381.42 151.95 L382.93 151.82 L384.43 151.23 L385.94 151.27 L387.45 152.06 L388.96 151.06 L390.46 149.52 L391.97 150.72 L393.48 151.61 L394.99 152.00 L396.49 151.42 L398.00 149.27 L399.51 149.48 L401.01 151.33 L402.52 152.02 L404.03 152.15 L405.54 152.34 L407.05 152.21 L408.55 151.76 L410.06 151.10 L411.57 150.96 L413.07 151.69 L414.58 152.41 L416.09 152.78 L417.60 153.11 L419.11 153.40 L420.61 153.26 L422.12 152.89 L423.63 152.79 L425.13 152.55 L426.64 151.59 L428.15 150.28 L429.66 149.86 L431.17 150.86 L432.67 152.73 L434.18 153.34 L435.69 152.90 L437.19 152.83 L438.70 152.84 L440.21 152.43 L441.72 151.84 L443.23 151.67 L444.73 151.33 L446.24 150.88 L447.75 151.19 L449.25 151.35 L450.76 152.60 L452.27 152.99 L453.78 152.35 L455.29 152.15 L456.79 151.88 L458.30 151.48 L459.81 151.84 L461.31 152.31 L462.82 152.23 L464.33 151.48 L465.84 150.44 L467.35 150.72 L468.85 151.42 L470.36 151.75 L471.87 151.76 L473.38 151.47 L474.88 152.25 L476.39 153.20 L477.90 153.67 L479.41 153.27 L480.91 151.79 L482.42 150.56 L483.93 151.33 L485.44 152.48 L486.94 152.51 L488.45 152.31 L489.96 152.91 L491.47 153.37 L492.97 153.00 L494.48 151.53 L495.99 150.02 L497.50 150.95 L499.00 152.28 L500.51 153.21 L502.02 152.94 L503.53 152.28 L505.03 153.07 L506.54 152.93 L508.05 152.18 L509.56 152.06 L511.06 151.40 L512.57 150.82 L514.08 150.72 L515.59 150.31 L517.09 149.91 L518.60 150.86 L520.11 151.56 L521.62 151.85 L523.12 152.21 L524.63 152.06 L526.14 151.92 L527.64 152.31 L529.15 152.58 L530.66 152.68 L532.17 152.06 L533.67 150.96 L535.18 151.65 L536.69 151.97 L538.20 151.38 L539.70 151.18 L541.21 150.95 L542.72 150.50 L544.23 150.40 L545.74 151.57 L547.24 152.80 L548.75 153.46 L550.26 153.48 L551.76 153.25 L553.27 153.21 L554.78 153.27 L556.29 153.02 L557.80 152.60 L559.30 152.53 L560.81 152.44 L562.32 152.48 L563.83 152.67 L565.33 152.40 L566.84 152.10 L568.35 152.14 L569.86 152.03 L571.36 151.78 L572.87 151.91 L574.38 152.24 L575.88 151.90 L577.39 151.30 L578.90 152.08 L580.41 152.15 L581.91 150.85 L583.42 150.44 L584.93 151.53 L586.44 152.19 L587.94 152.00 L589.45 151.59 L590.96 151.86 L592.47 152.41 L593.98 152.16 L595.48 151.37 L596.99 150.20 L598.50 149.26 L600.00 150.54 L601.51 151.77 L603.02 152.41 L604.53 152.75 L606.04 152.69 L607.54 153.25 L609.05 152.02 L610.56 150.34 L612.07 151.42 L613.57 152.17 L615.08 152.55 L616.59 152.65 L618.10 151.67 L619.60 150.98 L621.11 151.93 L622.62 152.83 L624.12 153.25 L625.63 152.91 L627.14 151.50 L628.65 150.60 L630.15 151.72 L631.66 151.99 L633.17 150.25 L634.68 149.51 L636.18 151.26 L637.69 151.86 L639.20 151.53 L640.71 151.04 L642.22 150.42 L643.72 150.58 L645.23 151.11 L646.74 151.23 L648.25 151.55 L649.75 152.48 L651.26 152.01 L652.77 150.47 L654.28 151.04 L655.78 151.66 L657.29 151.33 L658.80 151.09 L660.31 151.73 L661.81 152.19 L663.32 152.71 L664.83 153.24 L666.34 152.91 L667.84 151.98 L669.35 151.74 L670.86 152.16 L672.37 152.34 L673.87 152.27 L675.38 152.10 L676.89 152.49 L678.39 153.29 L679.90 153.30 L681.41 153.18 L682.92 153.48 L684.42 153.40 L685.93 152.23 L687.44 151.13 L688.95 151.70 L690.45 151.79 L691.96 151.44 L693.47 151.72 L694.98 151.69 L696.48 151.78 L697.99 151.71 L699.50 151.08 L701.01 150.44 L702.52 150.33 L704.02 151.09 L705.53 151.67 L707.04 151.87 L708.55 151.94 L710.05 151.97 L711.56 151.87 L713.07 151.82 L714.58 151.77 L716.08 151.50 L717.59 150.23 L719.10 148.88 L720.61 150.29 L722.11 151.45 L723.62 151.51 L725.13 151.78 L726.63 152.31 L728.14 152.38 L729.65 151.09 L731.16 150.29 L732.66 152.23 L734.17 153.44 L735.68 153.71 L737.19 153.67 L738.69 153.45 L740.20 153.19 L741.71 152.52 L743.22 152.12 L744.72 151.50 L746.23 150.57 L747.74 151.42 L749.25 152.51 L750.76 152.14 L752.26 150.68 L753.77 150.48 L755.28 151.33 L756.79 151.48 L758.29 151.33 L759.80 151.32 L759.8 232.2 L156.8 232.2 Z" fill="url(#g)"/>
<path d="M156.8 147.48 H759.8" stroke="#8fbcd6" stroke-opacity="0.12" stroke-width="0.6"/>
<path d="M156.8 168.36 H759.8" stroke="#8fbcd6" stroke-opacity="0.12" stroke-width="0.6"/>
<path d="M156.8 189.24 H759.8" stroke="#8fbcd6" stroke-opacity="0.12" stroke-width="0.6"/>
<path d="M156.8 210.12 H759.8" stroke="#8fbcd6" stroke-opacity="0.12" stroke-width="0.6"/>
<path d="M207.05 126.6 V232.2" stroke="#8fbcd6" stroke-opacity="0.13" stroke-width="0.6"/>
<path d="M257.30 126.6 V232.2" stroke="#8fbcd6" stroke-opacity="0.13" stroke-width="0.6"/>
<path d="M307.55 126.6 V232.2" stroke="#8fbcd6" stroke-opacity="0.13" stroke-width="0.6"/>
<path d="M357.80 126.6 V232.2" stroke="#8fbcd6" stroke-opacity="0.13" stroke-width="0.6"/>
<path d="M408.05 126.6 V232.2" stroke="#8fbcd6" stroke-opacity="0.13" stroke-width="0.6"/>
<path d="M458.30 126.6 V232.2" stroke="#8fbcd6" stroke-opacity="0.13" stroke-width="0.6"/>
<path d="M508.55 126.6 V232.2" stroke="#8fbcd6" stroke-opacity="0.13" stroke-width="0.6"/>
<path d="M558.80 126.6 V232.2" stroke="#8fbcd6" stroke-opacity="0.13" stroke-width="0.6"/>
<path d="M609.05 126.6 V232.2" stroke="#8fbcd6" stroke-opacity="0.13" stroke-width="0.6"/>
<path d="M659.30 126.6 V232.2" stroke="#8fbcd6" stroke-opacity="0.13" stroke-width="0.6"/>
<path d="M709.55 126.6 V232.2" stroke="#8fbcd6" stroke-opacity="0.13" stroke-width="0.6"/>
<path d="M156.80 151.18 L158.31 151.42 L159.81 151.71 L161.32 151.68 L162.83 151.78 L164.34 151.70 L165.84 151.61 L167.35 151.83 L168.86 152.01 L170.37 151.43 L171.88 150.46 L173.38 151.35 L174.89 152.46 L176.40 152.37 L177.91 151.62 L179.41 151.37 L180.92 151.99 L182.43 152.53 L183.94 151.89 L185.44 151.37 L186.95 152.61 L188.46 153.29 L189.97 153.39 L191.47 152.44 L192.98 150.36 L194.49 149.66 L196.00 150.98 L197.50 152.40 L199.01 152.57 L200.52 152.61 L202.03 152.56 L203.53 152.13 L205.04 151.58 L206.55 150.85 L208.06 150.47 L209.56 150.84 L211.07 151.45 L212.58 150.70 L214.09 149.75 L215.59 150.33 L217.10 150.05 L218.61 151.39 L220.12 152.67 L221.62 152.31 L223.13 150.89 L224.64 149.81 L226.15 151.10 L227.65 152.27 L229.16 152.19 L230.67 152.11 L232.18 152.16 L233.68 151.76 L235.19 151.76 L236.70 151.99 L238.21 151.42 L239.71 150.97 L241.22 150.89 L242.73 150.88 L244.24 152.84 L245.74 154.05 L247.25 153.84 L248.76 153.30 L250.27 151.86 L251.77 150.26 L253.28 151.20 L254.79 152.25 L256.30 152.68 L257.80 151.84 L259.31 150.37 L260.82 150.70 L262.33 150.75 L263.83 151.69 L265.34 152.65 L266.85 152.88 L268.36 152.71 L269.86 152.31 L271.37 152.45 L272.88 152.53 L274.38 152.15 L275.89 151.85 L277.40 151.35 L278.91 150.19 L280.42 149.52 L281.92 150.33 L283.43 150.67 L284.94 150.80 L286.45 151.20 L287.95 151.21 L289.46 151.63 L290.97 152.22 L292.48 152.72 L293.98 153.07 L295.49 153.23 L297.00 153.04 L298.50 152.71 L300.01 151.52 L301.52 150.47 L303.03 152.39 L304.54 153.30 L306.04 151.47 L307.55 149.86 L309.06 150.64 L310.56 151.51 L312.07 151.97 L313.58 152.35 L315.09 152.32 L316.60 152.44 L318.10 152.88 L319.61 152.30 L321.12 151.47 L322.62 151.46 L324.13 150.52 L325.64 151.39 L327.15 152.40 L328.65 152.14 L330.16 151.92 L331.67 152.28 L333.18 152.08 L334.69 151.38 L336.19 151.34 L337.70 151.12 L339.21 150.13 L340.72 149.51 L342.22 150.81 L343.73 150.57 L345.24 149.46 L346.75 149.87 L348.25 149.56 L349.76 150.86 L351.27 151.55 L352.77 151.17 L354.28 151.10 L355.79 151.24 L357.30 151.41 L358.81 151.80 L360.31 152.50 L361.82 152.52 L363.33 151.54 L364.84 150.88 L366.34 151.60 L367.85 152.10 L369.36 152.46 L370.87 153.45 L372.37 154.01 L373.88 153.78 L375.39 153.36 L376.89 152.79 L378.40 152.34 L379.91 152.07 L381.42 151.95 L382.93 151.82 L384.43 151.23 L385.94 151.27 L387.45 152.06 L388.96 151.06 L390.46 149.52 L391.97 150.72 L393.48 151.61 L394.99 152.00 L396.49 151.42 L398.00 149.27 L399.51 149.48 L401.01 151.33 L402.52 152.02 L404.03 152.15 L405.54 152.34 L407.05 152.21 L408.55 151.76 L410.06 151.10 L411.57 150.96 L413.07 151.69 L414.58 152.41 L416.09 152.78 L417.60 153.11 L419.11 153.40 L420.61 153.26 L422.12 152.89 L423.63 152.79 L425.13 152.55 L426.64 151.59 L428.15 150.28 L429.66 149.86 L431.17 150.86 L432.67 152.73 L434.18 153.34 L435.69 152.90 L437.19 152.83 L438.70 152.84 L440.21 152.43 L441.72 151.84 L443.23 151.67 L444.73 151.33 L446.24 150.88 L447.75 151.19 L449.25 151.35 L450.76 152.60 L452.27 152.99 L453.78 152.35 L455.29 152.15 L456.79 151.88 L458.30 151.48 L459.81 151.84 L461.31 152.31 L462.82 152.23 L464.33 151.48 L465.84 150.44 L467.35 150.72 L468.85 151.42 L470.36 151.75 L471.87 151.76 L473.38 151.47 L474.88 152.25 L476.39 153.20 L477.90 153.67 L479.41 153.27 L480.91 151.79 L482.42 150.56 L483.93 151.33 L485.44 152.48 L486.94 152.51 L488.45 152.31 L489.96 152.91 L491.47 153.37 L492.97 153.00 L494.48 151.53 L495.99 150.02 L497.50 150.95 L499.00 152.28 L500.51 153.21 L502.02 152.94 L503.53 152.28 L505.03 153.07 L506.54 152.93 L508.05 152.18 L509.56 152.06 L511.06 151.40 L512.57 150.82 L514.08 150.72 L515.59 150.31 L517.09 149.91 L518.60 150.86 L520.11 151.56 L521.62 151.85 L523.12 152.21 L524.63 152.06 L526.14 151.92 L527.64 152.31 L529.15 152.58 L530.66 152.68 L532.17 152.06 L533.67 150.96 L535.18 151.65 L536.69 151.97 L538.20 151.38 L539.70 151.18 L541.21 150.95 L542.72 150.50 L544.23 150.40 L545.74 151.57 L547.24 152.80 L548.75 153.46 L550.26 153.48 L551.76 153.25 L553.27 153.21 L554.78 153.27 L556.29 153.02 L557.80 152.60 L559.30 152.53 L560.81 152.44 L562.32 152.48 L563.83 152.67 L565.33 152.40 L566.84 152.10 L568.35 152.14 L569.86 152.03 L571.36 151.78 L572.87 151.91 L574.38 152.24 L575.88 151.90 L577.39 151.30 L578.90 152.08 L580.41 152.15 L581.91 150.85 L583.42 150.44 L584.93 151.53 L586.44 152.19 L587.94 152.00 L589.45 151.59 L590.96 151.86 L592.47 152.41 L593.98 152.16 L595.48 151.37 L596.99 150.20 L598.50 149.26 L600.00 150.54 L601.51 151.77 L603.02 152.41 L604.53 152.75 L606.04 152.69 L607.54 153.25 L609.05 152.02 L610.56 150.34 L612.07 151.42 L613.57 152.17 L615.08 152.55 L616.59 152.65 L618.10 151.67 L619.60 150.98 L621.11 151.93 L622.62 152.83 L624.12 153.25 L625.63 152.91 L627.14 151.50 L628.65 150.60 L630.15 151.72 L631.66 151.99 L633.17 150.25 L634.68 149.51 L636.18 151.26 L637.69 151.86 L639.20 151.53 L640.71 151.04 L642.22 150.42 L643.72 150.58 L645.23 151.11 L646.74 151.23 L648.25 151.55 L649.75 152.48 L651.26 152.01 L652.77 150.47 L654.28 151.04 L655.78 151.66 L657.29 151.33 L658.80 151.09 L660.31 151.73 L661.81 152.19 L663.32 152.71 L664.83 153.24 L666.34 152.91 L667.84 151.98 L669.35 151.74 L670.86 152.16 L672.37 152.34 L673.87 152.27 L675.38 152.10 L676.89 152.49 L678.39 153.29 L679.90 153.30 L681.41 153.18 L682.92 153.48 L684.42 153.40 L685.93 152.23 L687.44 151.13 L688.95 151.70 L690.45 151.79 L691.96 151.44 L693.47 151.72 L694.98 151.69 L696.48 151.78 L697.99 151.71 L699.50 151.08 L701.01 150.44 L702.52 150.33 L704.02 151.09 L705.53 151.67 L707.04 151.87 L708.55 151.94 L710.05 151.97 L711.56 151.87 L713.07 151.82 L714.58 151.77 L716.08 151.50 L717.59 150.23 L719.10 148.88 L720.61 150.29 L722.11 151.45 L723.62 151.51 L725.13 151.78 L726.63 152.31 L728.14 152.38 L729.65 151.09 L731.16 150.29 L732.66 152.23 L734.17 153.44 L735.68 153.71 L737.19 153.67 L738.69 153.45 L740.20 153.19 L741.71 152.52 L743.22 152.12 L744.72 151.50 L746.23 150.57 L747.74 151.42 L749.25 152.51 L750.76 152.14 L752.26 150.68 L753.77 150.48 L755.28 151.33 L756.79 151.48 L758.29 151.33 L759.80 151.32" fill="none" stroke="#8ad4f9" stroke-width="0.7"/>
</svg>
<div class="t" style="right:614.7px;top:120.7px;font-size:4.2px;color:#8f959c;font-weight:400;letter-spacing:-0.15px;">115.0</div>
<div class="t" style="right:614.7px;top:141.9px;font-size:4.2px;color:#8f959c;font-weight:400;letter-spacing:-0.15px;">92.0</div>
<div class="t" style="right:614.7px;top:162.8px;font-size:4.2px;color:#8f959c;font-weight:400;letter-spacing:-0.15px;">69.0</div>
<div class="t" style="right:614.7px;top:184.3px;font-size:4.2px;color:#8f959c;font-weight:400;letter-spacing:-0.15px;">46.0</div>
<div class="t" style="right:614.7px;top:205.0px;font-size:4.2px;color:#8f959c;font-weight:400;letter-spacing:-0.15px;">23.0</div>
<div class="t" style="left:138px;top:174.4px;font-size:5px;color:#8a9098;transform:rotate(-90deg);transform-origin:3px 5px">W</div>
<div class="t" style="left:156.8px;top:234.5px;font-size:4.2px;color:#8f959c;font-weight:400;letter-spacing:-0.1px;">10 PM</div>
<div class="t" style="left:157.05px;width:100px;text-align:center;top:234.5px;font-size:4.2px;color:#8f959c;font-weight:400;letter-spacing:-0.1px;">12 AM</div>
<div class="t" style="left:207.3px;width:100px;text-align:center;top:234.5px;font-size:4.2px;color:#8f959c;font-weight:400;letter-spacing:-0.1px;">2 AM</div>
<div class="t" style="left:257.55px;width:100px;text-align:center;top:234.5px;font-size:4.2px;color:#8f959c;font-weight:400;letter-spacing:-0.1px;">4 AM</div>
<div class="t" style="left:307.8px;width:100px;text-align:center;top:234.5px;font-size:4.2px;color:#8f959c;font-weight:400;letter-spacing:-0.1px;">6 AM</div>
<div class="t" style="left:358.05px;width:100px;text-align:center;top:234.5px;font-size:4.2px;color:#8f959c;font-weight:400;letter-spacing:-0.1px;">8 AM</div>
<div class="t" style="left:408.3px;width:100px;text-align:center;top:234.5px;font-size:4.2px;color:#8f959c;font-weight:400;letter-spacing:-0.1px;">10 AM</div>
<div class="t" style="left:458.55px;width:100px;text-align:center;top:234.5px;font-size:4.2px;color:#8f959c;font-weight:400;letter-spacing:-0.1px;">12 PM</div>
<div class="t" style="left:508.79999999999995px;width:100px;text-align:center;top:234.5px;font-size:4.2px;color:#8f959c;font-weight:400;letter-spacing:-0.1px;">2 PM</div>
<div class="t" style="left:559.05px;width:100px;text-align:center;top:234.5px;font-size:4.2px;color:#8f959c;font-weight:400;letter-spacing:-0.1px;">3 PM</div>
<div class="t" style="left:609.3px;width:100px;text-align:center;top:234.5px;font-size:4.2px;color:#8f959c;font-weight:400;letter-spacing:-0.1px;">5 PM</div>
<div class="t" style="left:659.55px;width:100px;text-align:center;top:234.5px;font-size:4.2px;color:#8f959c;font-weight:400;letter-spacing:-0.1px;">7 PM</div>
<div class="t" style="right:8.200000000000045px;top:234.5px;font-size:4.2px;color:#8f959c;font-weight:400;letter-spacing:-0.1px;">Now</div>
<div class="r" style="left:136.8px;top:247.3px;width:626.7px;height:0.6px;background:#f2f3f5;"></div>
<svg style="left:138px;top:251.4px" width="7" height="6"><path d="M1.9 0.4 L0.7 1.5 L1.9 2.6 M0.8 1.5 H3.4 A1.75 1.75 0 0 1 3.4 5 H1.2" fill="none" stroke="#3d86f5" stroke-width="0.7"/></svg>
<div class="t" style="left:146.6px;top:249.4px;font-size:5.8px;color:#3d86f5;font-weight:400;letter-spacing:-0.1px;">Port Configuration</div>
<svg style="left:391px;top:250.5px" width="8" height="8"><circle cx="3.9" cy="3.75" r="2.8" fill="none" stroke="#a4a9b0" stroke-width="0.9" stroke-dasharray="1.2 0.45"/><circle cx="3.9" cy="3.75" r="1.1" fill="none" stroke="#a4a9b0" stroke-width="0.7"/></svg>
<div class="t" style="left:403px;top:249.6px;font-size:5.4px;color:#7d838b;font-weight:400;letter-spacing:-0.12px;">USW Pro XG 10 PoE - Device Version: 7.2.123</div>
<svg style="left:138.9px;top:266.5px" width="7" height="7"><rect x="0" y="0" width="6.3" height="6.4" rx="1" fill="#1a6ffa"/><path d="M1.5 3.3 L2.7 4.5 L4.9 2" fill="none" stroke="#fff" stroke-width="0.8"/></svg>
<div class="t" style="left:151.5px;top:264.7px;font-size:5.6px;color:#3d86f5;font-weight:700;letter-spacing:-0.1px;-webkit-text-stroke-width:0;">Port</div>
<div class="t" style="left:179.2px;top:264.7px;font-size:5.6px;color:#2a2d31;font-weight:700;letter-spacing:-0.15px;-webkit-text-stroke-width:0;">Anomaly</div>
<div class="t" style="left:218.9px;top:264.7px;font-size:5.6px;color:#2a2d31;font-weight:700;letter-spacing:-0.15px;-webkit-text-stroke-width:0;">Name</div>
<div class="t" style="left:256.5px;top:264.7px;font-size:5.6px;color:#2a2d31;font-weight:700;letter-spacing:-0.15px;-webkit-text-stroke-width:0;">Connection</div>
<div class="t" style="left:328.6px;top:264.7px;font-size:5.6px;color:#2a2d31;font-weight:700;letter-spacing:-0.15px;-webkit-text-stroke-width:0;">Operation</div>
<div class="t" style="left:368.5px;top:264.7px;font-size:5.6px;color:#2a2d31;font-weight:700;letter-spacing:-0.15px;-webkit-text-stroke-width:0;">PoE Mode</div>
<div class="t" style="left:408px;top:264.7px;font-size:5.6px;color:#2a2d31;font-weight:700;letter-spacing:-0.15px;-webkit-text-stroke-width:0;">Speed</div>
<div class="t" style="left:439.5px;top:264.7px;font-size:5.6px;color:#2a2d31;font-weight:700;letter-spacing:-0.15px;-webkit-text-stroke-width:0;">Connected MAC</div>
<div class="t" style="left:495.2px;top:264.7px;font-size:5.6px;color:#2a2d31;font-weight:700;letter-spacing:-0.15px;-webkit-text-stroke-width:0;">Connected IP</div>
<div class="t" style="left:542.9px;top:264.7px;font-size:5.6px;color:#2a2d31;font-weight:700;letter-spacing:-0.15px;-webkit-text-stroke-width:0;">Profile</div>
<div class="t" style="left:590.5px;top:264.7px;font-size:5.6px;color:#2a2d31;font-weight:700;letter-spacing:-0.15px;-webkit-text-stroke-width:0;">Native VLAN</div>
<div class="t" style="left:645.3px;top:264.7px;font-size:5.6px;color:#2a2d31;font-weight:700;letter-spacing:-0.15px;-webkit-text-stroke-width:0;">Activity</div>
<div class="t" style="left:700px;top:264.7px;font-size:5.6px;color:#2a2d31;font-weight:700;letter-spacing:-0.15px;-webkit-text-stroke-width:0;">Tx Sum</div>
<div class="t" style="left:739.1px;top:264.7px;font-size:5.6px;color:#2a2d31;font-weight:700;letter-spacing:-0.15px;-webkit-text-stroke-width:0;">Rx Sum</div>
<div class="r" style="left:0;top:0;width:758.2px;height:415.3px;overflow:hidden">
<div class="r" style="left:136.8px;top:275.3px;width:621.4px;height:144.98px;background:#e2eefd;"></div>
<div class="r" style="left:136.8px;top:287.88px;width:621.4px;height:0.6px;background:#e6ecf7;"></div>
<svg style="left:138.9px;top:278.4px" width="7" height="7"><rect x="0" y="0" width="6.3" height="6.4" rx="1" fill="#1a6ffa"/><path d="M1.5 3.3 L2.7 4.5 L4.9 2" fill="none" stroke="#fff" stroke-width="0.8"/></svg>
<div class="r" style="left:151.3px;top:277.4px;width:7.9px;height:7.8px;background:#c9cacf;border-radius:1.3px"></div>
<svg style="left:151.4px;top:277.4px" width="8" height="8"><path d="M3.1 1.1 L3.8 3.2 L5.6 3.9 L3.8 4.6 L3.1 6.7 L2.4 4.6 L0.6 3.9 L2.4 3.2 Z" fill="#fff"/><circle cx="6.5" cy="1.8" r="0.6" fill="#fff"/><circle cx="6.5" cy="3.9" r="0.6" fill="#fff"/><circle cx="6.5" cy="6" r="0.6" fill="#fff"/></svg>
<div class="t" style="left:162.4px;top:276.59999999999997px;font-size:5.6px;color:#7a8088;font-weight:400;letter-spacing:-0.1px;">1</div>
<div class="t" style="left:179.2px;top:276.59999999999997px;font-size:5.3px;color:#62cf78;font-weight:400;">0</div>
<div class="t" style="left:218.9px;top:276.59999999999997px;font-size:5.6px;color:#7a8088;font-weight:400;letter-spacing:-0.1px;">Port 1</div>
<div class="t" style="left:257px;top:276.59999999999997px;font-size:5.6px;color:#7a8088;font-weight:400;">-</div>
<div class="r" style="left:329.4px;top:278.59999999999997px;width:6px;height:6px;background:transparent;border:0.6px solid #d6dbe1;border-radius:1px"></div>
<div class="t" style="left:368.5px;top:276.59999999999997px;font-size:5.6px;color:#7a8088;font-weight:400;letter-spacing:-0.1px;">PoE+++</div>
<div class="t" style="left:408px;top:276.59999999999997px;font-size:5.6px;color:#7a8088;font-weight:400;letter-spacing:-0.12px;">Auto</div>
<div class="t" style="left:439.2px;top:276.59999999999997px;font-size:5.4px;color:#7a8088;font-weight:400;letter-spacing:0.08px;">-</div>
<div class="t" style="left:495.2px;top:276.59999999999997px;font-size:5.4px;color:#7a8088;font-weight:400;letter-spacing:-0.15px;">-</div>
<div class="t" style="left:542.9px;top:276.59999999999997px;font-size:5.6px;color:#7a8088;font-weight:400;">-</div>
<div class="t" style="left:590.5px;top:276.59999999999997px;font-size:5.6px;color:#7a8088;font-weight:400;letter-spacing:-0.1px;">Office</div>
<div class="t" style="left:700px;top:276.59999999999997px;font-size:5.6px;color:#b36cf2;font-weight:400;letter-spacing:-0.1px;">0 B</div>
<div class="t" style="left:739.1px;top:276.59999999999997px;font-size:5.6px;color:#4fc3f7;font-weight:400;letter-spacing:-0.1px;">0 B</div>
<div class="r" style="left:136.8px;top:301.06px;width:621.4px;height:0.6px;background:#e6ecf7;"></div>
<svg style="left:138.9px;top:291.59999999999997px" width="7" height="7"><rect x="0" y="0" width="6.3" height="6.4" rx="1" fill="#1a6ffa"/><path d="M1.5 3.3 L2.7 4.5 L4.9 2" fill="none" stroke="#fff" stroke-width="0.8"/></svg>
<div class="r" style="left:151.3px;top:290.59999999999997px;width:7.9px;height:7.8px;background:#c9cacf;border-radius:1.3px"></div>
<svg style="left:151.4px;top:290.59999999999997px" width="8" height="8"><path d="M3.1 1.1 L3.8 3.2 L5.6 3.9 L3.8 4.6 L3.1 6.7 L2.4 4.6 L0.6 3.9 L2.4 3.2 Z" fill="#fff"/><circle cx="6.5" cy="1.8" r="0.6" fill="#fff"/><circle cx="6.5" cy="3.9" r="0.6" fill="#fff"/><circle cx="6.5" cy="6" r="0.6" fill="#fff"/></svg>
<div class="t" style="left:162.4px;top:289.79999999999995px;font-size:5.6px;color:#7a8088;font-weight:400;letter-spacing:-0.1px;">2</div>
<div class="t" style="left:179.2px;top:289.79999999999995px;font-size:5.3px;color:#62cf78;font-weight:400;">0</div>
<div class="t" style="left:218.9px;top:289.79999999999995px;font-size:5.6px;color:#7a8088;font-weight:400;letter-spacing:-0.1px;">Port 2</div>
<div class="t" style="left:257px;top:289.79999999999995px;font-size:5.6px;color:#7a8088;font-weight:400;">-</div>
<div class="r" style="left:329.4px;top:291.79999999999995px;width:6px;height:6px;background:transparent;border:0.6px solid #d6dbe1;border-radius:1px"></div>
<div class="t" style="left:368.5px;top:289.79999999999995px;font-size:5.6px;color:#7a8088;font-weight:400;letter-spacing:-0.1px;">PoE+++</div>
<div class="t" style="left:408px;top:289.79999999999995px;font-size:5.6px;color:#7a8088;font-weight:400;letter-spacing:-0.12px;">Auto</div>
<div class="t" style="left:439.2px;top:289.79999999999995px;font-size:5.4px;color:#7a8088;font-weight:400;letter-spacing:0.08px;">-</div>
<div class="t" style="left:495.2px;top:289.79999999999995px;font-size:5.4px;color:#7a8088;font-weight:400;letter-spacing:-0.15px;">-</div>
<div class="t" style="left:542.9px;top:289.79999999999995px;font-size:5.6px;color:#7a8088;font-weight:400;">-</div>
<div class="t" style="left:590.5px;top:289.79999999999995px;font-size:5.6px;color:#7a8088;font-weight:400;letter-spacing:-0.1px;">Office</div>
<div class="t" style="left:700px;top:289.79999999999995px;font-size:5.6px;color:#b36cf2;font-weight:400;letter-spacing:-0.1px;">0 B</div>
<div class="t" style="left:739.1px;top:289.79999999999995px;font-size:5.6px;color:#4fc3f7;font-weight:400;letter-spacing:-0.1px;">0 B</div>
<div class="r" style="left:136.8px;top:314.24px;width:621.4px;height:0.6px;background:#e6ecf7;"></div>
<svg style="left:138.9px;top:304.7px" width="7" height="7"><rect x="0" y="0" width="6.3" height="6.4" rx="1" fill="#1a6ffa"/><path d="M1.5 3.3 L2.7 4.5 L4.9 2" fill="none" stroke="#fff" stroke-width="0.8"/></svg>
<div class="r" style="left:151.3px;top:303.7px;width:7.9px;height:7.8px;background:#c9cacf;border-radius:1.3px"></div>
<svg style="left:151.4px;top:303.7px" width="8" height="8"><path d="M3.1 1.1 L3.8 3.2 L5.6 3.9 L3.8 4.6 L3.1 6.7 L2.4 4.6 L0.6 3.9 L2.4 3.2 Z" fill="#fff"/><circle cx="6.5" cy="1.8" r="0.6" fill="#fff"/><circle cx="6.5" cy="3.9" r="0.6" fill="#fff"/><circle cx="6.5" cy="6" r="0.6" fill="#fff"/></svg>
<div class="t" style="left:162.4px;top:302.9px;font-size:5.6px;color:#7a8088;font-weight:400;letter-spacing:-0.1px;">3</div>
<div class="t" style="left:179.2px;top:302.9px;font-size:5.3px;color:#62cf78;font-weight:400;">0</div>
<div class="t" style="left:218.9px;top:302.9px;font-size:5.6px;color:#7a8088;font-weight:400;letter-spacing:-0.1px;">Port 3</div>
<div class="t" style="left:257px;top:302.9px;font-size:5.6px;color:#7a8088;font-weight:400;">-</div>
<div class="r" style="left:329.4px;top:304.9px;width:6px;height:6px;background:transparent;border:0.6px solid #d6dbe1;border-radius:1px"></div>
<div class="t" style="left:368.5px;top:302.9px;font-size:5.6px;color:#7a8088;font-weight:400;letter-spacing:-0.1px;">PoE+++</div>
<div class="t" style="left:408px;top:302.9px;font-size:5.6px;color:#7a8088;font-weight:400;letter-spacing:-0.12px;">Auto</div>
<div class="t" style="left:439.2px;top:302.9px;font-size:5.4px;color:#7a8088;font-weight:400;letter-spacing:0.08px;">-</div>
<div class="t" style="left:495.2px;top:302.9px;font-size:5.4px;color:#7a8088;font-weight:400;letter-spacing:-0.15px;">-</div>
<div class="t" style="left:542.9px;top:302.9px;font-size:5.6px;color:#7a8088;font-weight:400;">-</div>
<div class="t" style="left:590.5px;top:302.9px;font-size:5.6px;color:#7a8088;font-weight:400;letter-spacing:-0.1px;">Office</div>
<div class="t" style="left:700px;top:302.9px;font-size:5.6px;color:#b36cf2;font-weight:400;letter-spacing:-0.1px;">0 B</div>
<div class="t" style="left:739.1px;top:302.9px;font-size:5.6px;color:#4fc3f7;font-weight:400;letter-spacing:-0.1px;">0 B</div>
<div class="r" style="left:136.8px;top:327.41999999999996px;width:621.4px;height:0.6px;background:#e6ecf7;"></div>
<svg style="left:138.9px;top:317.9px" width="7" height="7"><rect x="0" y="0" width="6.3" height="6.4" rx="1" fill="#1a6ffa"/><path d="M1.5 3.3 L2.7 4.5 L4.9 2" fill="none" stroke="#fff" stroke-width="0.8"/></svg>
<div class="r" style="left:151.3px;top:316.9px;width:7.9px;height:7.8px;background:#c9cacf;border-radius:1.3px"></div>
<svg style="left:151.4px;top:316.9px" width="8" height="8"><path d="M3.1 1.1 L3.8 3.2 L5.6 3.9 L3.8 4.6 L3.1 6.7 L2.4 4.6 L0.6 3.9 L2.4 3.2 Z" fill="#fff"/><circle cx="6.5" cy="1.8" r="0.6" fill="#fff"/><circle cx="6.5" cy="3.9" r="0.6" fill="#fff"/><circle cx="6.5" cy="6" r="0.6" fill="#fff"/></svg>
<div class="t" style="left:162.4px;top:316.09999999999997px;font-size:5.6px;color:#7a8088;font-weight:400;letter-spacing:-0.1px;">4</div>
<div class="t" style="left:179.2px;top:316.09999999999997px;font-size:5.3px;color:#62cf78;font-weight:400;">0</div>
<div class="t" style="left:218.9px;top:316.09999999999997px;font-size:5.6px;color:#7a8088;font-weight:400;letter-spacing:-0.1px;">Port 4</div>
<div class="t" style="left:257px;top:316.09999999999997px;font-size:5.6px;color:#7a8088;font-weight:400;">-</div>
<div class="r" style="left:329.4px;top:318.09999999999997px;width:6px;height:6px;background:transparent;border:0.6px solid #d6dbe1;border-radius:1px"></div>
<div class="t" style="left:368.5px;top:316.09999999999997px;font-size:5.6px;color:#7a8088;font-weight:400;letter-spacing:-0.1px;">PoE+++</div>
<div class="t" style="left:408px;top:316.09999999999997px;font-size:5.6px;color:#7a8088;font-weight:400;letter-spacing:-0.12px;">Auto</div>
<div class="t" style="left:439.2px;top:316.09999999999997px;font-size:5.4px;color:#7a8088;font-weight:400;letter-spacing:0.08px;">-</div>
<div class="t" style="left:495.2px;top:316.09999999999997px;font-size:5.4px;color:#7a8088;font-weight:400;letter-spacing:-0.15px;">-</div>
<div class="t" style="left:542.9px;top:316.09999999999997px;font-size:5.6px;color:#7a8088;font-weight:400;">-</div>
<div class="t" style="left:590.5px;top:316.09999999999997px;font-size:5.6px;color:#7a8088;font-weight:400;letter-spacing:-0.1px;">Office</div>
<div class="t" style="left:700px;top:316.09999999999997px;font-size:5.6px;color:#b36cf2;font-weight:400;letter-spacing:-0.1px;">0 B</div>
<div class="t" style="left:739.1px;top:316.09999999999997px;font-size:5.6px;color:#4fc3f7;font-weight:400;letter-spacing:-0.1px;">0 B</div>
<div class="r" style="left:136.8px;top:340.6px;width:621.4px;height:0.6px;background:#e6ecf7;"></div>
<svg style="left:138.9px;top:331.09999999999997px" width="7" height="7"><rect x="0" y="0" width="6.3" height="6.4" rx="1" fill="#1a6ffa"/><path d="M1.5 3.3 L2.7 4.5 L4.9 2" fill="none" stroke="#fff" stroke-width="0.8"/></svg>
<div class="r" style="left:151.3px;top:330.09999999999997px;width:7.9px;height:7.8px;background:#3a9fcb;border-radius:1.3px"></div>
<svg style="left:151.4px;top:330.09999999999997px" width="8" height="8"><path d="M3.1 1.1 L3.8 3.2 L5.6 3.9 L3.8 4.6 L3.1 6.7 L2.4 4.6 L0.6 3.9 L2.4 3.2 Z" fill="#fff"/><circle cx="6.5" cy="1.8" r="0.6" fill="#fff"/><circle cx="6.5" cy="3.9" r="0.6" fill="#fff"/><circle cx="6.5" cy="6" r="0.6" fill="#fff"/></svg>
<div class="t" style="left:162.4px;top:329.29999999999995px;font-size:5.6px;color:#7a8088;font-weight:400;letter-spacing:-0.1px;">5</div>
<div class="t" style="left:179.2px;top:329.29999999999995px;font-size:5.3px;color:#62cf78;font-weight:400;">0</div>
<div class="t" style="left:218.9px;top:329.29999999999995px;font-size:5.6px;color:#7a8088;font-weight:400;letter-spacing:-0.1px;">Port 5</div>
<svg style="left:256.8px;top:331.4px" width="8" height="7"><path d="M0.3 0.2 H6.9 L7.1 5.6 H0.1 Z" fill="#33363e"/><rect x="0.2" y="0.2" width="1.6" height="5.4" fill="#24272d"/><rect x="2.2" y="0.6" width="4.4" height="2.3" fill="#6b3f68"/><rect x="3" y="0.9" width="2.9" height="1.5" fill="#c46488"/><rect x="2.2" y="3.3" width="4.6" height="2" fill="#4a4e58"/></svg>
<div class="t" style="left:265.6px;top:329.29999999999995px;font-size:5.6px;color:#7a8088;font-weight:400;letter-spacing:-0.12px;">BackHall 6b:5f</div>
<div class="r" style="left:329.4px;top:331.29999999999995px;width:6px;height:6px;background:transparent;border:0.6px solid #d6dbe1;border-radius:1px"></div>
<div class="t" style="left:368.5px;top:329.29999999999995px;font-size:5.6px;color:#7a8088;font-weight:400;letter-spacing:-0.1px;">PoE+++</div>
<div class="t" style="left:408px;top:329.29999999999995px;font-size:5.6px;color:#3a9fcb;font-weight:400;letter-spacing:-0.12px;">10 GbE</div>
<div class="t" style="left:439.2px;top:329.29999999999995px;font-size:5.4px;color:#7a8088;font-weight:400;letter-spacing:0.08px;">90:e2:02:a4:5e:08</div>
<div class="t" style="left:495.2px;top:329.29999999999995px;font-size:5.4px;color:#7a8088;font-weight:400;letter-spacing:-0.15px;">192.168.254.35</div>
<div class="t" style="left:542.9px;top:329.29999999999995px;font-size:5.6px;color:#7a8088;font-weight:400;">-</div>
<div class="t" style="left:590.5px;top:329.29999999999995px;font-size:5.6px;color:#7a8088;font-weight:400;letter-spacing:-0.1px;">Office</div>
<div class="r" style="left:645px;top:331.59999999999997px;width:48.3px;height:1.6px;background:#d4deef;border-radius:0.8px"></div>
<div class="r" style="left:645px;top:334.9px;width:48.3px;height:1.6px;background:#d4deef;border-radius:0.8px"></div>
<div class="r" style="left:645px;top:331.4px;width:1.2px;height:2px;background:#c79cf3;border-radius:0.5px"></div>
<div class="r" style="left:645px;top:334.69999999999993px;width:1.2px;height:2px;background:#86d3f3;border-radius:0.5px"></div>
<div class="t" style="left:700px;top:329.29999999999995px;font-size:5.6px;color:#b36cf2;font-weight:400;letter-spacing:-0.1px;">121 GB</div>
<div class="t" style="left:739.1px;top:329.29999999999995px;font-size:5.6px;color:#4fc3f7;font-weight:400;letter-spacing:-0.1px;">27.4 GB</div>
<div class="r" style="left:136.8px;top:353.78px;width:621.4px;height:0.6px;background:#e6ecf7;"></div>
<svg style="left:138.9px;top:344.5px" width="7" height="7"><rect x="0" y="0" width="6.3" height="6.4" rx="1" fill="#1a6ffa"/><path d="M1.5 3.3 L2.7 4.5 L4.9 2" fill="none" stroke="#fff" stroke-width="0.8"/></svg>
<div class="r" style="left:151.3px;top:343.5px;width:7.9px;height:7.8px;background:#3a9fcb;border-radius:1.3px"></div>
<svg style="left:151.4px;top:343.5px" width="8" height="8"><path d="M3.1 1.1 L3.8 3.2 L5.6 3.9 L3.8 4.6 L3.1 6.7 L2.4 4.6 L0.6 3.9 L2.4 3.2 Z" fill="#fff"/><circle cx="6.5" cy="1.8" r="0.6" fill="#fff"/><circle cx="6.5" cy="3.9" r="0.6" fill="#fff"/><circle cx="6.5" cy="6" r="0.6" fill="#fff"/></svg>
<div class="t" style="left:162.4px;top:342.7px;font-size:5.6px;color:#7a8088;font-weight:400;letter-spacing:-0.1px;">6</div>
<div class="t" style="left:179.2px;top:342.7px;font-size:5.3px;color:#62cf78;font-weight:400;">0</div>
<div class="t" style="left:218.9px;top:342.7px;font-size:5.6px;color:#7a8088;font-weight:400;letter-spacing:-0.1px;">Port 6</div>
<svg style="left:256.8px;top:344.8px" width="8" height="7"><path d="M0.3 0.2 H6.9 L7.1 5.6 H0.1 Z" fill="#33363e"/><rect x="0.2" y="0.2" width="1.6" height="5.4" fill="#24272d"/><rect x="2.2" y="0.6" width="4.4" height="2.3" fill="#6b3f68"/><rect x="3" y="0.9" width="2.9" height="1.5" fill="#c46488"/><rect x="2.2" y="3.3" width="4.6" height="2" fill="#4a4e58"/></svg>
<div class="t" style="left:265.6px;top:342.7px;font-size:5.6px;color:#7a8088;font-weight:400;letter-spacing:-0.12px;">UpperLab 3a:9f</div>
<div class="r" style="left:329.4px;top:344.7px;width:6px;height:6px;background:transparent;border:0.6px solid #d6dbe1;border-radius:1px"></div>
<div class="t" style="left:368.5px;top:342.7px;font-size:5.6px;color:#7a8088;font-weight:400;letter-spacing:-0.1px;">PoE+++</div>
<div class="t" style="left:408px;top:342.7px;font-size:5.6px;color:#3a9fcb;font-weight:400;letter-spacing:-0.12px;">10 GbE</div>
<div class="t" style="left:439.2px;top:342.7px;font-size:5.4px;color:#7a8088;font-weight:400;letter-spacing:0.08px;">50:bb:b5:50:c7:9c</div>
<div class="t" style="left:495.2px;top:342.7px;font-size:5.4px;color:#7a8088;font-weight:400;letter-spacing:-0.15px;">192.168.253.140</div>
<div class="t" style="left:542.9px;top:342.7px;font-size:5.6px;color:#7a8088;font-weight:400;">-</div>
<div class="t" style="left:590.5px;top:342.7px;font-size:5.6px;color:#7a8088;font-weight:400;letter-spacing:-0.1px;">Office</div>
<div class="r" style="left:645px;top:345.0px;width:48.3px;height:1.6px;background:#d4deef;border-radius:0.8px"></div>
<div class="r" style="left:645px;top:348.3px;width:48.3px;height:1.6px;background:#d4deef;border-radius:0.8px"></div>
<div class="r" style="left:645px;top:344.8px;width:1.2px;height:2px;background:#c79cf3;border-radius:0.5px"></div>
<div class="r" style="left:645px;top:348.09999999999997px;width:1.2px;height:2px;background:#86d3f3;border-radius:0.5px"></div>
<div class="t" style="left:700px;top:342.7px;font-size:5.6px;color:#b36cf2;font-weight:400;letter-spacing:-0.1px;">22.4 GB</div>
<div class="t" style="left:739.1px;top:342.7px;font-size:5.6px;color:#4fc3f7;font-weight:400;letter-spacing:-0.1px;">2.11 GB</div>
<div class="r" style="left:136.8px;top:366.96px;width:621.4px;height:0.6px;background:#e6ecf7;"></div>
<svg style="left:138.9px;top:357.5px" width="7" height="7"><rect x="0" y="0" width="6.3" height="6.4" rx="1" fill="#1a6ffa"/><path d="M1.5 3.3 L2.7 4.5 L4.9 2" fill="none" stroke="#fff" stroke-width="0.8"/></svg>
<div class="r" style="left:151.3px;top:356.5px;width:7.9px;height:7.8px;background:#3a9fcb;border-radius:1.3px"></div>
<svg style="left:151.4px;top:356.5px" width="8" height="8"><path d="M3.1 1.1 L3.8 3.2 L5.6 3.9 L3.8 4.6 L3.1 6.7 L2.4 4.6 L0.6 3.9 L2.4 3.2 Z" fill="#fff"/><circle cx="6.5" cy="1.8" r="0.6" fill="#fff"/><circle cx="6.5" cy="3.9" r="0.6" fill="#fff"/><circle cx="6.5" cy="6" r="0.6" fill="#fff"/></svg>
<div class="t" style="left:162.4px;top:355.7px;font-size:5.6px;color:#7a8088;font-weight:400;letter-spacing:-0.1px;">7</div>
<div class="t" style="left:179.2px;top:355.7px;font-size:5.3px;color:#62cf78;font-weight:400;">0</div>
<div class="t" style="left:218.9px;top:355.7px;font-size:5.6px;color:#7a8088;font-weight:400;letter-spacing:-0.1px;">Port 7</div>
<svg style="left:256.8px;top:357.8px" width="8" height="7"><path d="M0.3 0.2 H6.9 L7.1 5.6 H0.1 Z" fill="#33363e"/><rect x="0.2" y="0.2" width="1.6" height="5.4" fill="#24272d"/><rect x="2.2" y="0.6" width="4.4" height="2.3" fill="#6b3f68"/><rect x="3" y="0.9" width="2.9" height="1.5" fill="#c46488"/><rect x="2.2" y="3.3" width="4.6" height="2" fill="#4a4e58"/></svg>
<div class="t" style="left:265.6px;top:355.7px;font-size:5.6px;color:#7a8088;font-weight:400;letter-spacing:-0.12px;">FrontOffice 60:7f</div>
<div class="r" style="left:329.4px;top:357.7px;width:6px;height:6px;background:transparent;border:0.6px solid #d6dbe1;border-radius:1px"></div>
<div class="t" style="left:368.5px;top:355.7px;font-size:5.6px;color:#7a8088;font-weight:400;letter-spacing:-0.1px;">PoE+++</div>
<div class="t" style="left:408px;top:355.7px;font-size:5.6px;color:#3a9fcb;font-weight:400;letter-spacing:-0.12px;">10 GbE</div>
<div class="t" style="left:439.2px;top:355.7px;font-size:5.4px;color:#7a8088;font-weight:400;letter-spacing:0.08px;">9c:76:13:28:02:32</div>
<div class="t" style="left:495.2px;top:355.7px;font-size:5.4px;color:#7a8088;font-weight:400;letter-spacing:-0.15px;">192.168.254.50</div>
<div class="t" style="left:542.9px;top:355.7px;font-size:5.6px;color:#7a8088;font-weight:400;">-</div>
<div class="t" style="left:590.5px;top:355.7px;font-size:5.6px;color:#7a8088;font-weight:400;letter-spacing:-0.1px;">Office</div>
<div class="r" style="left:645px;top:358.0px;width:48.3px;height:1.6px;background:#d4deef;border-radius:0.8px"></div>
<div class="r" style="left:645px;top:361.3px;width:48.3px;height:1.6px;background:#d4deef;border-radius:0.8px"></div>
<div class="r" style="left:645px;top:357.8px;width:1.2px;height:2px;background:#c79cf3;border-radius:0.5px"></div>
<div class="r" style="left:645px;top:361.09999999999997px;width:1.2px;height:2px;background:#86d3f3;border-radius:0.5px"></div>
<div class="t" style="left:700px;top:355.7px;font-size:5.6px;color:#b36cf2;font-weight:400;letter-spacing:-0.1px;">121 GB</div>
<div class="t" style="left:739.1px;top:355.7px;font-size:5.6px;color:#4fc3f7;font-weight:400;letter-spacing:-0.1px;">4.31 GB</div>
<div class="r" style="left:136.8px;top:380.14px;width:621.4px;height:0.6px;background:#e6ecf7;"></div>
<svg style="left:138.9px;top:370.5px" width="7" height="7"><rect x="0" y="0" width="6.3" height="6.4" rx="1" fill="#1a6ffa"/><path d="M1.5 3.3 L2.7 4.5 L4.9 2" fill="none" stroke="#fff" stroke-width="0.8"/></svg>
<div class="r" style="left:151.3px;top:369.5px;width:7.9px;height:7.8px;background:#3a9fcb;border-radius:1.3px"></div>
<svg style="left:151.4px;top:369.5px" width="8" height="8"><path d="M3.1 1.1 L3.8 3.2 L5.6 3.9 L3.8 4.6 L3.1 6.7 L2.4 4.6 L0.6 3.9 L2.4 3.2 Z" fill="#fff"/><circle cx="6.5" cy="1.8" r="0.6" fill="#fff"/><circle cx="6.5" cy="3.9" r="0.6" fill="#fff"/><circle cx="6.5" cy="6" r="0.6" fill="#fff"/></svg>
<div class="t" style="left:162.4px;top:368.7px;font-size:5.6px;color:#7a8088;font-weight:400;letter-spacing:-0.1px;">8</div>
<div class="t" style="left:179.2px;top:368.7px;font-size:5.3px;color:#62cf78;font-weight:400;">0</div>
<div class="t" style="left:218.9px;top:368.7px;font-size:5.6px;color:#7a8088;font-weight:400;letter-spacing:-0.1px;">Port 8</div>
<svg style="left:256.8px;top:370.8px" width="8" height="7"><path d="M0.3 0.2 H6.9 L7.1 5.6 H0.1 Z" fill="#33363e"/><rect x="0.2" y="0.2" width="1.6" height="5.4" fill="#24272d"/><rect x="2.2" y="0.6" width="4.4" height="2.3" fill="#6b3f68"/><rect x="3" y="0.9" width="2.9" height="1.5" fill="#c46488"/><rect x="2.2" y="3.3" width="4.6" height="2" fill="#4a4e58"/></svg>
<div class="t" style="left:265.6px;top:368.7px;font-size:5.6px;color:#7a8088;font-weight:400;letter-spacing:-0.12px;">LowerOffice 66:7f</div>
<div class="r" style="left:329.4px;top:370.7px;width:6px;height:6px;background:transparent;border:0.6px solid #d6dbe1;border-radius:1px"></div>
<div class="t" style="left:368.5px;top:368.7px;font-size:5.6px;color:#7a8088;font-weight:400;letter-spacing:-0.1px;">PoE+++</div>
<div class="t" style="left:408px;top:368.7px;font-size:5.6px;color:#3a9fcb;font-weight:400;letter-spacing:-0.12px;">10 GbE</div>
<div class="t" style="left:439.2px;top:368.7px;font-size:5.4px;color:#7a8088;font-weight:400;letter-spacing:0.08px;">54:07:7d:5c:66:7f</div>
<div class="t" style="left:495.2px;top:368.7px;font-size:5.4px;color:#7a8088;font-weight:400;letter-spacing:-0.15px;">192.168.253.176</div>
<div class="t" style="left:542.9px;top:368.7px;font-size:5.6px;color:#7a8088;font-weight:400;">-</div>
<div class="t" style="left:590.5px;top:368.7px;font-size:5.6px;color:#7a8088;font-weight:400;letter-spacing:-0.1px;">Office</div>
<div class="r" style="left:645px;top:371.0px;width:48.3px;height:1.6px;background:#d4deef;border-radius:0.8px"></div>
<div class="r" style="left:645px;top:374.3px;width:48.3px;height:1.6px;background:#d4deef;border-radius:0.8px"></div>
<div class="r" style="left:645px;top:370.8px;width:1.2px;height:2px;background:#c79cf3;border-radius:0.5px"></div>
<div class="r" style="left:645px;top:374.09999999999997px;width:1.2px;height:2px;background:#86d3f3;border-radius:0.5px"></div>
<div class="t" style="left:700px;top:368.7px;font-size:5.6px;color:#b36cf2;font-weight:400;letter-spacing:-0.1px;">8.40 GB</div>
<div class="t" style="left:739.1px;top:368.7px;font-size:5.6px;color:#4fc3f7;font-weight:400;letter-spacing:-0.1px;">656 MB</div>
<div class="r" style="left:136.8px;top:393.32px;width:621.4px;height:0.6px;background:#e6ecf7;"></div>
<svg style="left:138.9px;top:383.7px" width="7" height="7"><rect x="0" y="0" width="6.3" height="6.4" rx="1" fill="#1a6ffa"/><path d="M1.5 3.3 L2.7 4.5 L4.9 2" fill="none" stroke="#fff" stroke-width="0.8"/></svg>
<div class="r" style="left:151.3px;top:382.7px;width:7.9px;height:7.8px;background:#3a9fcb;border-radius:1.3px"></div>
<svg style="left:151.4px;top:382.7px" width="8" height="8"><path d="M3.1 1.1 L3.8 3.2 L5.6 3.9 L3.8 4.6 L3.1 6.7 L2.4 4.6 L0.6 3.9 L2.4 3.2 Z" fill="#fff"/><circle cx="6.5" cy="1.8" r="0.6" fill="#fff"/><circle cx="6.5" cy="3.9" r="0.6" fill="#fff"/><circle cx="6.5" cy="6" r="0.6" fill="#fff"/></svg>
<div class="t" style="left:162.4px;top:381.9px;font-size:5.6px;color:#7a8088;font-weight:400;letter-spacing:-0.1px;">9</div>
<div class="t" style="left:179.2px;top:381.9px;font-size:5.3px;color:#62cf78;font-weight:400;">0</div>
<div class="t" style="left:218.9px;top:381.9px;font-size:5.6px;color:#7a8088;font-weight:400;letter-spacing:-0.1px;">Port 9</div>
<svg style="left:256.8px;top:384.0px" width="8" height="7"><path d="M0.3 0.2 H6.9 L7.1 5.6 H0.1 Z" fill="#33363e"/><rect x="0.2" y="0.2" width="1.6" height="5.4" fill="#24272d"/><rect x="2.2" y="0.6" width="4.4" height="2.3" fill="#6b3f68"/><rect x="3" y="0.9" width="2.9" height="1.5" fill="#c46488"/><rect x="2.2" y="3.3" width="4.6" height="2" fill="#4a4e58"/></svg>
<div class="t" style="left:265.6px;top:381.9px;font-size:5.6px;color:#7a8088;font-weight:400;letter-spacing:-0.12px;">LunchRoom 8c:5f</div>
<div class="r" style="left:329.4px;top:383.9px;width:6px;height:6px;background:transparent;border:0.6px solid #d6dbe1;border-radius:1px"></div>
<div class="t" style="left:368.5px;top:381.9px;font-size:5.6px;color:#7a8088;font-weight:400;letter-spacing:-0.1px;">PoE+++</div>
<div class="t" style="left:408px;top:381.9px;font-size:5.6px;color:#3a9fcb;font-weight:400;letter-spacing:-0.12px;">10 GbE</div>
<div class="t" style="left:439.2px;top:381.9px;font-size:5.4px;color:#7a8088;font-weight:400;letter-spacing:0.08px;">54:07:7d:5c:8c:5f</div>
<div class="t" style="left:495.2px;top:381.9px;font-size:5.4px;color:#7a8088;font-weight:400;letter-spacing:-0.15px;">192.168.254.86</div>
<div class="t" style="left:542.9px;top:381.9px;font-size:5.6px;color:#7a8088;font-weight:400;">-</div>
<div class="t" style="left:590.5px;top:381.9px;font-size:5.6px;color:#7a8088;font-weight:400;letter-spacing:-0.1px;">Office</div>
<div class="r" style="left:645px;top:384.2px;width:48.3px;height:1.6px;background:#d4deef;border-radius:0.8px"></div>
<div class="r" style="left:645px;top:387.5px;width:48.3px;height:1.6px;background:#d4deef;border-radius:0.8px"></div>
<div class="r" style="left:645px;top:384.0px;width:1.2px;height:2px;background:#c79cf3;border-radius:0.5px"></div>
<div class="r" style="left:645px;top:387.29999999999995px;width:1.2px;height:2px;background:#86d3f3;border-radius:0.5px"></div>
<div class="t" style="left:700px;top:381.9px;font-size:5.6px;color:#b36cf2;font-weight:400;letter-spacing:-0.1px;">4.00 GB</div>
<div class="t" style="left:739.1px;top:381.9px;font-size:5.6px;color:#4fc3f7;font-weight:400;letter-spacing:-0.1px;">601 MB</div>
<div class="r" style="left:136.8px;top:406.5px;width:621.4px;height:0.6px;background:#e6ecf7;"></div>
<svg style="left:138.9px;top:396.9px" width="7" height="7"><rect x="0" y="0" width="6.3" height="6.4" rx="1" fill="#1a6ffa"/><path d="M1.5 3.3 L2.7 4.5 L4.9 2" fill="none" stroke="#fff" stroke-width="0.8"/></svg>
<div class="r" style="left:151.3px;top:395.9px;width:7.9px;height:7.8px;background:#3a9fcb;border-radius:1.3px"></div>
<svg style="left:151.4px;top:395.9px" width="8" height="8"><path d="M3.1 1.1 L3.8 3.2 L5.6 3.9 L3.8 4.6 L3.1 6.7 L2.4 4.6 L0.6 3.9 L2.4 3.2 Z" fill="#fff"/><circle cx="6.5" cy="1.8" r="0.6" fill="#fff"/><circle cx="6.5" cy="3.9" r="0.6" fill="#fff"/><circle cx="6.5" cy="6" r="0.6" fill="#fff"/></svg>
<div class="t" style="left:162.4px;top:395.09999999999997px;font-size:5.6px;color:#7a8088;font-weight:400;letter-spacing:-0.1px;">10</div>
<div class="t" style="left:179.2px;top:395.09999999999997px;font-size:5.3px;color:#62cf78;font-weight:400;">0</div>
<div class="t" style="left:218.9px;top:395.09999999999997px;font-size:5.6px;color:#7a8088;font-weight:400;letter-spacing:-0.1px;">Port 10</div>
<svg style="left:256.8px;top:397.2px" width="8" height="7"><path d="M0.3 0.2 H6.9 L7.1 5.6 H0.1 Z" fill="#33363e"/><rect x="0.2" y="0.2" width="1.6" height="5.4" fill="#24272d"/><rect x="2.2" y="0.6" width="4.4" height="2.3" fill="#6b3f68"/><rect x="3" y="0.9" width="2.9" height="1.5" fill="#c46488"/><rect x="2.2" y="3.3" width="4.6" height="2" fill="#4a4e58"/></svg>
<div class="t" style="left:265.6px;top:395.09999999999997px;font-size:5.6px;color:#7a8088;font-weight:400;letter-spacing:-0.12px;">LowerHall 48:7f</div>
<div class="r" style="left:329.4px;top:397.09999999999997px;width:6px;height:6px;background:transparent;border:0.6px solid #d6dbe1;border-radius:1px"></div>
<div class="t" style="left:368.5px;top:395.09999999999997px;font-size:5.6px;color:#7a8088;font-weight:400;letter-spacing:-0.1px;">PoE+++</div>
<div class="t" style="left:408px;top:395.09999999999997px;font-size:5.6px;color:#3a9fcb;font-weight:400;letter-spacing:-0.12px;">10 GbE</div>
<div class="t" style="left:439.2px;top:395.09999999999997px;font-size:5.4px;color:#7a8088;font-weight:400;letter-spacing:0.08px;">54:07:7d:5c:48:7f</div>
<div class="t" style="left:495.2px;top:395.09999999999997px;font-size:5.4px;color:#7a8088;font-weight:400;letter-spacing:-0.15px;">192.168.253.60</div>
<div class="t" style="left:542.9px;top:395.09999999999997px;font-size:5.6px;color:#7a8088;font-weight:400;">-</div>
<div class="t" style="left:590.5px;top:395.09999999999997px;font-size:5.6px;color:#7a8088;font-weight:400;letter-spacing:-0.1px;">Office</div>
<div class="r" style="left:645px;top:397.4px;width:48.3px;height:1.6px;background:#d4deef;border-radius:0.8px"></div>
<div class="r" style="left:645px;top:400.7px;width:48.3px;height:1.6px;background:#d4deef;border-radius:0.8px"></div>
<div class="r" style="left:645px;top:397.2px;width:1.2px;height:2px;background:#c79cf3;border-radius:0.5px"></div>
<div class="r" style="left:645px;top:400.49999999999994px;width:1.2px;height:2px;background:#86d3f3;border-radius:0.5px"></div>
<div class="t" style="left:700px;top:395.09999999999997px;font-size:5.6px;color:#b36cf2;font-weight:400;letter-spacing:-0.1px;">8.18 GB</div>
<div class="t" style="left:739.1px;top:395.09999999999997px;font-size:5.6px;color:#4fc3f7;font-weight:400;letter-spacing:-0.1px;">956 MB</div>
<div class="r" style="left:136.8px;top:419.67999999999995px;width:621.4px;height:0.6px;background:#e6ecf7;"></div>
<svg style="left:138.9px;top:409.5px" width="7" height="7"><rect x="0" y="0" width="6.3" height="6.4" rx="1" fill="#1a6ffa"/><path d="M1.5 3.3 L2.7 4.5 L4.9 2" fill="none" stroke="#fff" stroke-width="0.8"/></svg>
<div class="r" style="left:151.3px;top:408.5px;width:7.9px;height:7.8px;background:#3a9fcb;border-radius:1.3px"></div>
<svg style="left:151.4px;top:408.8px" width="8" height="8"><path d="M2 5 L3.9 3 L5.8 5" stroke="#fff" stroke-width="0.6" fill="none"/></svg>
<div class="t" style="left:162.4px;top:407.7px;font-size:5.6px;color:#7a8088;font-weight:400;letter-spacing:-0.1px;">11</div>
<div class="t" style="left:179.2px;top:407.7px;font-size:5.3px;color:#62cf78;font-weight:400;">0</div>
<div class="t" style="left:218.9px;top:407.7px;font-size:5.6px;color:#7a8088;font-weight:400;letter-spacing:-0.1px;">SFP+ 1</div>
<div class="r" style="left:257.2px;top:412.4px;width:5.5px;height:0.7px;background:#6f737a;"></div>
<div class="t" style="left:265.6px;top:407.7px;font-size:5.6px;color:#7a8088;font-weight:400;letter-spacing:-0.12px;">Unifi7420</div>
<div class="r" style="left:329.4px;top:409.7px;width:6px;height:6px;background:transparent;border:0.6px solid #d6dbe1;border-radius:1px"></div>
<div class="t" style="left:368.5px;top:407.7px;font-size:5.6px;color:#7a8088;font-weight:400;letter-spacing:-0.1px;">-</div>
<div class="t" style="left:408px;top:407.7px;font-size:5.6px;color:#3a9fcb;font-weight:400;letter-spacing:-0.12px;">10 GbE</div>
<div class="t" style="left:439.2px;top:407.7px;font-size:5.4px;color:#7a8088;font-weight:400;letter-spacing:0.08px;">9c:05:d6:c1:0b:aa</div>
<div class="t" style="left:495.2px;top:407.7px;font-size:5.4px;color:#7a8088;font-weight:400;letter-spacing:-0.15px;">192.168.1.1</div>
<div class="t" style="left:542.9px;top:407.7px;font-size:5.6px;color:#7a8088;font-weight:400;">-</div>
<div class="t" style="left:590.5px;top:407.7px;font-size:5.6px;color:#7a8088;font-weight:400;letter-spacing:-0.1px;">Office</div>
<div class="r" style="left:645px;top:410.0px;width:48.3px;height:1.6px;background:#d4deef;border-radius:0.8px"></div>
<div class="r" style="left:645px;top:413.3px;width:48.3px;height:1.6px;background:#d4deef;border-radius:0.8px"></div>
<div class="r" style="left:645px;top:409.8px;width:1.2px;height:2px;background:#c79cf3;border-radius:0.5px"></div>
<div class="r" style="left:645px;top:413.09999999999997px;width:1.2px;height:2px;background:#86d3f3;border-radius:0.5px"></div>
<div class="t" style="left:700px;top:407.7px;font-size:5.6px;color:#b36cf2;font-weight:400;letter-spacing:-0.1px;">36.8 GB</div>
<div class="t" style="left:739.1px;top:407.7px;font-size:5.6px;color:#4fc3f7;font-weight:400;letter-spacing:-0.1px;">277 GB</div>
</div>
<div class="r" style="left:132.6px;top:415.8px;width:629.4px;height:1.8px;background:#dcdfe3;border-radius:1px"></div>
</div></body></html>
